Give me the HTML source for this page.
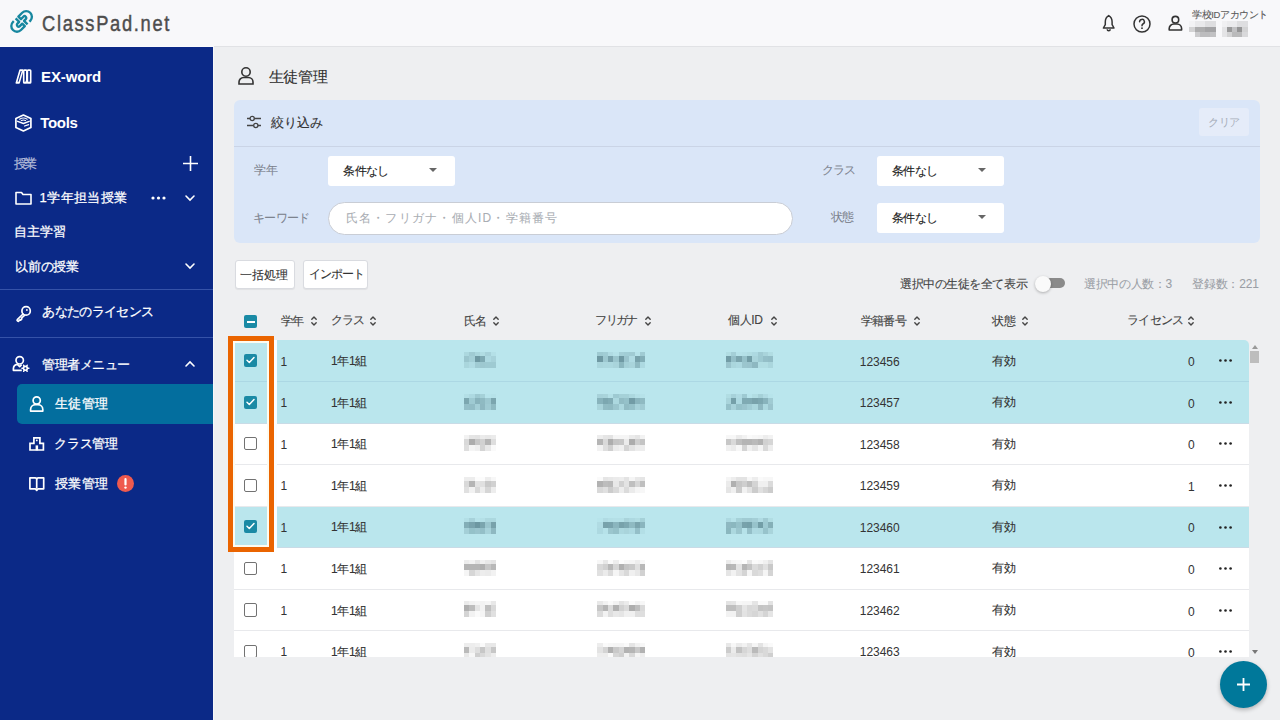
<!DOCTYPE html>
<html lang="ja">
<head>
<meta charset="utf-8">
<style>
*{box-sizing:border-box;margin:0;padding:0}
html,body{width:1280px;height:720px;overflow:hidden;background:#eeeff1;font-family:"Liberation Sans",sans-serif;color:#333}
.abs{position:absolute}
.t{position:absolute;white-space:nowrap;line-height:1;-webkit-text-stroke:0.12px currentColor}
.sb{-webkit-text-stroke:0.25px currentColor}
#jugyo{-webkit-text-stroke:0.18px currentColor}
#l_grade,#l_kw,#l_class,#l_state,#ph,#clear,#selcount,#total{-webkit-text-stroke:0.05px currentColor}
#exword,#tools{-webkit-text-stroke:0}
.dg{-webkit-text-stroke:0}
svg{position:absolute;overflow:visible}
.row{position:absolute;left:0;width:1015px}
.mz{position:absolute}
.mz i{position:absolute;display:block}
</style>
</head>
<body>
<div class="abs" style="left:0;top:0;width:1280px;height:47px;background:#f8f8fa;border-bottom:1px solid #e1e2e5"></div>
<svg style="left:0px;top:0px" width="44" height="44" viewBox="0 0 44 44">
<g transform="translate(21.6 21.4) rotate(-45) scale(0.86)" fill="none" stroke="#17879f" stroke-width="2.75" stroke-linejoin="round">
<path d="M6.2 6.6 H7.6 A6.6 6.6 0 0 0 7.6 -6.6 H1.3 V-2.4 H5.3 A2 2 0 0 1 5.3 1.6 H2.4 V7.4"/>
<path d="M-6.2 -6.6 H-7.6 A6.6 6.6 0 0 0 -7.6 6.6 H-1.3 V2.4 H-5.3 A2 2 0 0 1 -5.3 -1.6 H-2.4 V-7.4"/>
</g></svg>
<div class="t" id="logo" style="left:42.00px;top:13.20px;font-size:21.80px;color:#4d4d4d;letter-spacing:2.00px;transform:scaleX(0.84);transform-origin:0 0;-webkit-text-stroke:0.45px #4d4d4d;">ClassPad.net</div>
<svg style="left:0;top:0" width="1" height="1" viewBox="0 0 1 1" fill="none" stroke="#333" stroke-width="1.5" stroke-linejoin="round">
<path d="M1108.7 15.6 C1106.2 17 1105.3 19.3 1105.3 22 V24.6 L1103.4 28 H1114 L1112.1 24.6 V22 C1112.1 19.3 1111.2 17 1108.7 15.6 Z"/>
<path d="M1107.2 29.2 A1.5 1.5 0 0 0 1110.2 29.2"/></svg>
<svg style="left:1133px;top:14.5px" width="18" height="18" viewBox="0 0 18 18" fill="none" stroke="#333" stroke-width="1.5">
<circle cx="9" cy="9" r="8"/>
<path d="M6.6 6.8 A2.4 2.4 0 1 1 9.9 9 C9.2 9.4 9 9.9 9 10.8" stroke-linecap="round"/>
<circle cx="9" cy="13.2" r="0.9" fill="#333" stroke="none"/></svg>
<svg style="left:0;top:0" width="1" height="1" viewBox="0 0 1 1" fill="none" stroke="#333" stroke-width="1.6" stroke-linejoin="round">
<circle cx="1175.4" cy="19.7" r="3.3"/>
<path d="M1169.2 30 V28.6 A4.6 4.6 0 0 1 1173.8 24 H1177 A4.6 4.6 0 0 1 1181.6 28.6 V30 Z"/></svg>
<div class="t" id="acct" style="left:1192.00px;top:10.40px;font-size:9.50px;color:#5c5c5c;letter-spacing:-0.40px;">学校IDアカウント</div>
<i class="abs" style="left:1189px;top:21px;width:6px;height:6px;background:rgba(0,0,0,0.02)"></i><i class="abs" style="left:1195px;top:21px;width:5px;height:6px;background:rgba(0,0,0,0.06)"></i><i class="abs" style="left:1200px;top:21px;width:5px;height:6px;background:rgba(0,0,0,0.06)"></i><i class="abs" style="left:1205px;top:21px;width:5px;height:6px;background:rgba(0,0,0,0.1)"></i><i class="abs" style="left:1210px;top:21px;width:6px;height:6px;background:rgba(0,0,0,0.1)"></i><i class="abs" style="left:1189px;top:27px;width:6px;height:5px;background:rgba(0,0,0,0.15)"></i><i class="abs" style="left:1195px;top:27px;width:5px;height:5px;background:rgba(0,0,0,0.3)"></i><i class="abs" style="left:1200px;top:27px;width:5px;height:5px;background:rgba(0,0,0,0.3)"></i><i class="abs" style="left:1205px;top:27px;width:5px;height:5px;background:rgba(0,0,0,0.34)"></i><i class="abs" style="left:1210px;top:27px;width:6px;height:5px;background:rgba(0,0,0,0.34)"></i><i class="abs" style="left:1189px;top:32px;width:6px;height:5px;background:rgba(0,0,0,0.0)"></i><i class="abs" style="left:1195px;top:32px;width:5px;height:5px;background:rgba(0,0,0,0.18)"></i><i class="abs" style="left:1200px;top:32px;width:5px;height:5px;background:rgba(0,0,0,0.24)"></i><i class="abs" style="left:1205px;top:32px;width:5px;height:5px;background:rgba(0,0,0,0.24)"></i><i class="abs" style="left:1210px;top:32px;width:6px;height:5px;background:rgba(0,0,0,0.22)"></i><i class="abs" style="left:1222px;top:21px;width:5px;height:6px;background:rgba(0,0,0,0.03)"></i><i class="abs" style="left:1227px;top:21px;width:5px;height:6px;background:rgba(0,0,0,0.05)"></i><i class="abs" style="left:1232px;top:21px;width:5px;height:6px;background:rgba(0,0,0,0.05)"></i><i class="abs" style="left:1237px;top:21px;width:5px;height:6px;background:rgba(0,0,0,0.1)"></i><i class="abs" style="left:1242px;top:21px;width:6px;height:6px;background:rgba(0,0,0,0.1)"></i><i class="abs" style="left:1222px;top:27px;width:5px;height:5px;background:rgba(0,0,0,0.08)"></i><i class="abs" style="left:1227px;top:27px;width:5px;height:5px;background:rgba(0,0,0,0.38)"></i><i class="abs" style="left:1232px;top:27px;width:5px;height:5px;background:rgba(0,0,0,0.22)"></i><i class="abs" style="left:1237px;top:27px;width:5px;height:5px;background:rgba(0,0,0,0.4)"></i><i class="abs" style="left:1242px;top:27px;width:6px;height:5px;background:rgba(0,0,0,0.15)"></i><i class="abs" style="left:1222px;top:32px;width:5px;height:5px;background:rgba(0,0,0,0.08)"></i><i class="abs" style="left:1227px;top:32px;width:5px;height:5px;background:rgba(0,0,0,0.15)"></i><i class="abs" style="left:1232px;top:32px;width:5px;height:5px;background:rgba(0,0,0,0.25)"></i><i class="abs" style="left:1237px;top:32px;width:5px;height:5px;background:rgba(0,0,0,0.25)"></i><i class="abs" style="left:1242px;top:32px;width:6px;height:5px;background:rgba(0,0,0,0.12)"></i>
<div class="abs" style="left:0;top:46px;width:213.5px;height:1px;background:#fbfbfd"></div>
<div class="abs" style="left:0;top:47px;width:213px;height:673px;background:#0b2987"></div>
<div class="abs" style="left:213px;top:47px;width:1px;height:673px;background:#f6f7f9"></div>
<svg style="left:15px;top:69px" width="17" height="15" viewBox="0 0 17 15" fill="none" stroke="#fff" stroke-width="1.6" stroke-linejoin="round">
<path d="M5.1 1.1 H7.8 L4.1 13.9 H1.3 Z"/>
<rect x="8.7" y="1.1" width="3.1" height="12.8" rx="0.7"/>
<rect x="12.4" y="1.1" width="3.3" height="12.8" rx="0.7"/>
<circle cx="2.9" cy="12.3" r="0.55" fill="#fff" stroke="none"/><circle cx="10.25" cy="12.3" r="0.55" fill="#fff" stroke="none"/><circle cx="14.05" cy="12.3" r="0.55" fill="#fff" stroke="none"/>
</svg>
<div class="t" id="exword" style="left:41.00px;top:69.00px;font-size:15.00px;color:#fff;font-weight:700;letter-spacing:-0.10px;">EX-word</div>
<svg style="left:15px;top:114px" width="17" height="18" viewBox="0 0 17 18" fill="none" stroke="#fff" stroke-width="1.7" stroke-linejoin="round" stroke-linecap="round">
<path d="M8.4 1 L15.9 4.6 V13.5 L8.4 17 L0.9 13.5 V4.6 Z"/>
<path d="M2.6 7.3 L8.4 9.5 L14.2 7.3" stroke-width="1.4"/>
<path d="M4.6 5.2 Q8.4 2.9 12.2 5.2 M6.3 6.6 Q8.4 5.5 10.5 6.6" stroke-width="1.1"/>
<path d="M9.6 12 L13.6 10.6" stroke-width="1.3"/>
</svg>
<div class="t" id="tools" style="left:40.20px;top:115.40px;font-size:15.00px;color:#fff;font-weight:700;letter-spacing:-0.30px;">Tools</div>
<div class="t" id="jugyo" style="left:13.60px;top:157.00px;font-size:13.00px;color:#b4bcd9;letter-spacing:-2.60px;">授業</div>
<svg style="left:182.5px;top:155.5px" width="15" height="15" viewBox="0 0 15 15" stroke="#fff" stroke-width="1.6"><path d="M7.5 0V15M0 7.5H15"/></svg>
<svg style="left:15px;top:190.5px" width="17" height="14" viewBox="0 0 17 14" fill="none" stroke="#fff" stroke-width="1.6" stroke-linejoin="round">
<path d="M1 1.5 H6.5 L8 3.5 H16 V13 H1 Z"/></svg>
<div class="t sb" id="grade1" style="left:39.60px;top:191.40px;font-size:13.00px;color:#fff;letter-spacing:0.40px;">1学年担当授業</div>
<svg style="left:151px;top:195.5px" width="15" height="4" viewBox="0 0 15 4" fill="#fff"><circle cx="2" cy="2" r="1.6"/><circle cx="7.5" cy="2" r="1.6"/><circle cx="13" cy="2" r="1.6"/></svg>
<svg style="left:185px;top:194.5px" width="10" height="6" viewBox="0 0 10 6" fill="none" stroke="#fff" stroke-width="1.6" stroke-linecap="round"><path d="M1 1L5 5L9 1"/></svg>
<div class="t sb" id="jishu" style="left:13.80px;top:225.20px;font-size:13.00px;color:#fff;letter-spacing:0.07px;">自主学習</div>
<div class="t sb" id="izen" style="left:14.80px;top:259.60px;font-size:13.00px;color:#fff;letter-spacing:-0.10px;">以前の授業</div>
<svg style="left:185px;top:262.5px" width="10" height="6" viewBox="0 0 10 6" fill="none" stroke="#fff" stroke-width="1.6" stroke-linecap="round"><path d="M1 1L5 5L9 1"/></svg>
<div class="abs" style="left:0;top:289px;width:213px;height:1px;background:#3552a8"></div>
<svg style="left:0;top:0" width="1" height="1" viewBox="0 0 1 1" fill="none" stroke="#fff" stroke-width="1.7" stroke-linecap="round" stroke-linejoin="round">
<circle cx="26.1" cy="310.9" r="4.2"/><circle cx="26.9" cy="310" r="0.9" fill="#fff" stroke="none"/>
<path d="M23 314 L17.3 319.7 Q16.8 320.4 17.5 320.9 L18.3 321.3 L19.9 319.9 L20.6 320.2 L21.8 318.9 L21.6 318 L24.5 315.3"/>
</svg>
<div class="t sb" id="license" style="left:42.40px;top:305.20px;font-size:13.00px;color:#fff;letter-spacing:-0.65px;">あなたのライセンス</div>
<div class="abs" style="left:0;top:337px;width:213px;height:1px;background:#3552a8"></div>
<svg style="left:0;top:0" width="1" height="1" viewBox="0 0 1 1" fill="none" stroke="#fff" stroke-width="1.7" stroke-linejoin="round">
<circle cx="19.7" cy="360.3" r="3.7"/>
<path d="M21.8 370.3 H13.4 V368.6 A4.6 4.6 0 0 1 17.4 364.3 L19.7 366.6 L21.6 364.6"/>
<circle cx="25.4" cy="368.3" r="1.9" stroke-width="1.6"/>
<path d="M27.60 368.30 L28.90 368.30 M26.50 370.21 L27.15 371.33 M24.30 370.21 L23.65 371.33 M23.20 368.30 L21.90 368.30 M24.30 366.39 L23.65 365.27 M26.50 366.39 L27.15 365.27" stroke-width="1.5" stroke-linecap="round"/>
</svg>
<div class="t sb" id="admin" style="left:42.00px;top:358.40px;font-size:13.00px;color:#fff;letter-spacing:-0.43px;">管理者メニュー</div>
<svg style="left:185px;top:361px" width="10" height="6" viewBox="0 0 10 6" fill="none" stroke="#fff" stroke-width="1.6" stroke-linecap="round"><path d="M1 5L5 1L9 5"/></svg>
<div class="abs" style="left:16.5px;top:383.7px;width:196.5px;height:40px;background:#036e9e;border-radius:5px 0 0 5px"></div>
<svg style="left:0;top:0" width="1" height="1" viewBox="0 0 1 1" fill="none" stroke="#fff" stroke-width="1.7" stroke-linejoin="round">
<circle cx="36.7" cy="400.5" r="3.6"/>
<path d="M30.6 411.1 V409.6 A4.9 4.9 0 0 1 35.5 404.7 H37.9 A4.9 4.9 0 0 1 42.8 409.6 V411.1 Z"/>
</svg>
<div class="t sb" id="seito_s" style="left:55.00px;top:397.20px;font-size:13.00px;color:#fff;letter-spacing:0.33px;">生徒管理</div>
<svg style="left:0;top:0" width="1" height="1" viewBox="0 0 1 1" fill="none" stroke="#fff" stroke-width="1.7" stroke-linejoin="miter">
<path d="M30 450 V443.3 H33.9 V437.8 H39.9 V443.3 H43.4 V450 Z"/>
<circle cx="36.8" cy="440.4" r="0.9" fill="#fff" stroke="none"/>
<rect x="35.6" y="445.4" width="2.5" height="5" fill="#fff" stroke="none"/>
</svg>
<div class="t sb" id="class_s" style="left:54.00px;top:437.00px;font-size:13.00px;color:#fff;letter-spacing:-0.25px;">クラス管理</div>
<svg style="left:0;top:0" width="1" height="1" viewBox="0 0 1 1" fill="none" stroke="#fff" stroke-width="1.7" stroke-linejoin="round">
<path d="M29.9 477.9 H35.3 Q36.7 477.9 36.7 479.2 Q36.7 477.9 38.1 477.9 H43.7 V488.8 H38.1 L36.7 490.4 L35.3 488.8 H29.9 Z"/>
<path d="M36.7 479.2 V488.8"/>
</svg>
<div class="t sb" id="jugyo_s" style="left:55.00px;top:477.00px;font-size:13.00px;color:#fff;letter-spacing:0.33px;">授業管理</div>
<svg style="left:117px;top:475px" width="17" height="17" viewBox="0 0 17 17"><circle cx="8.5" cy="8.5" r="8.5" fill="#ef5a4e"/><path d="M8.5 4 V9.5" stroke="#fff" stroke-width="2.2" stroke-linecap="round"/><circle cx="8.5" cy="12.6" r="1.2" fill="#fff"/></svg>
<svg style="left:238px;top:67px" width="16" height="18" viewBox="0 0 16 18" fill="none" stroke="#333" stroke-width="1.6">
<circle cx="8" cy="5" r="4.2"/>
<path d="M1 17 V15 A4.5 4.5 0 0 1 5.5 10.5 H10.5 A4.5 4.5 0 0 1 15 15 V17 Z"/></svg>
<div class="t" id="title" style="left:268.60px;top:69.30px;font-size:15.00px;color:#333;letter-spacing:-0.33px;">生徒管理</div>
<div class="abs" style="left:234px;top:100px;width:1026px;height:143px;background:#dae6f8;border-radius:6px"></div>
<div class="abs" style="left:234px;top:146px;width:1026px;height:1px;background:#cad4e6"></div>
<svg style="left:246px;top:115px" width="16" height="14" viewBox="0 0 16 14" fill="none" stroke="#444" stroke-width="1.3">
<path d="M1 3.5H4M8.5 3.5H15M1 10.5H7.5M12 10.5H15"/>
<circle cx="6.2" cy="3.5" r="2.1"/><circle cx="9.8" cy="10.5" r="2.1"/></svg>
<div class="t" id="shibori" style="left:271.00px;top:115.80px;font-size:13.00px;color:#333;letter-spacing:0.07px;">絞り込み</div>
<div class="abs" style="left:1199px;top:108px;width:50px;height:28px;background:#e5ecf9;border-radius:3px"></div>
<div class="t" id="clear" style="left:1208.00px;top:116.80px;font-size:11.00px;color:#a9b0bc;letter-spacing:-0.50px;">クリア</div>
<div class="t" id="l_grade" style="left:254.20px;top:164.40px;font-size:12.00px;color:#7d838e;">学年</div>
<div class="abs" style="left:328px;top:156px;width:127px;height:30px;background:#fff;border-radius:3px"></div>
<div class="t" id="sel1" style="left:343.20px;top:165.10px;font-size:12.00px;color:#222;letter-spacing:-0.60px;">条件なし</div>
<svg style="left:429px;top:168px" width="8" height="4" viewBox="0 0 8 4"><path d="M0 0H8L4 4Z" fill="#666"/></svg>
<div class="t" id="l_kw" style="left:253.20px;top:211.80px;font-size:12.00px;color:#7d838e;letter-spacing:-0.80px;">キーワード</div>
<div class="abs" style="left:327.5px;top:201.5px;width:465px;height:33.5px;background:#fff;border:1px solid #c9cdd5;border-radius:17px"></div>
<div class="t" id="ph" style="left:345.60px;top:212.00px;font-size:12.00px;color:#a9adb3;letter-spacing:1.24px;">氏名・フリガナ・個人ID・学籍番号</div>
<div class="t" id="l_class" style="left:821.60px;top:164.00px;font-size:12.00px;color:#7d838e;letter-spacing:-0.80px;">クラス</div>
<div class="abs" style="left:877px;top:156px;width:127px;height:30px;background:#fff;border-radius:3px"></div>
<div class="t" id="sel2" style="left:892.20px;top:165.30px;font-size:12.00px;color:#222;letter-spacing:-0.73px;">条件なし</div>
<svg style="left:978px;top:168px" width="8" height="4" viewBox="0 0 8 4"><path d="M0 0H8L4 4Z" fill="#666"/></svg>
<div class="t" id="l_state" style="left:831.00px;top:210.80px;font-size:12.00px;color:#7d838e;letter-spacing:-0.80px;">状態</div>
<div class="abs" style="left:877px;top:202.7px;width:127px;height:30px;background:#fff;border-radius:3px"></div>
<div class="t" id="sel3" style="left:892.20px;top:211.90px;font-size:12.00px;color:#222;letter-spacing:-0.73px;">条件なし</div>
<svg style="left:978px;top:214.7px" width="8" height="4" viewBox="0 0 8 4"><path d="M0 0H8L4 4Z" fill="#666"/></svg>
<div class="abs" style="left:234.5px;top:260.3px;width:60.5px;height:29px;background:#fff;border:1px solid #d9dbe0;border-radius:3px;box-shadow:0 1px 1px rgba(0,0,0,.06)"></div>
<div class="t" id="btn1" style="left:240.40px;top:269.20px;font-size:12.00px;color:#333;letter-spacing:-0.07px;">一括処理</div>
<div class="abs" style="left:302.6px;top:260.3px;width:65.8px;height:29px;background:#fff;border:1px solid #d9dbe0;border-radius:3px;box-shadow:0 1px 1px rgba(0,0,0,.06)"></div>
<div class="t" id="btn2" style="left:308.60px;top:268.40px;font-size:12.00px;color:#333;letter-spacing:-0.95px;">インポート</div>
<div class="t" id="showall" style="left:900.00px;top:277.60px;font-size:12.00px;color:#444;letter-spacing:-0.44px;">選択中の生徒を全て表示</div>
<div class="abs" style="left:1038.4px;top:277.6px;width:26.5px;height:10.5px;background:#8a8a8a;border-radius:6px"></div>
<div class="abs" style="left:1035px;top:276.2px;width:16px;height:16px;background:#fafafa;border-radius:50%;box-shadow:0 1px 3px rgba(0,0,0,.28)"></div>
<div class="t" id="selcount" style="left:1084.00px;top:278.40px;font-size:12.00px;color:#9a9ea5;letter-spacing:-0.34px;">選択中の人数：3</div>
<div class="t" id="total" style="left:1192.00px;top:277.80px;font-size:12.00px;color:#9a9ea5;letter-spacing:-0.17px;">登録数：221</div>
<div class="abs" style="left:244px;top:315.3px;width:13.2px;height:13.2px;background:#1a8aa5;border-radius:2px"></div>
<div class="abs" style="left:246.6px;top:320.9px;width:8px;height:2px;background:#fff"></div>
<div class="t" id="h_grade" style="left:281.00px;top:314.80px;font-size:12.00px;color:#444;letter-spacing:-1.00px;">学年</div>
<svg style="left:311px;top:316.3px" width="6" height="10" viewBox="0 0 6 10" fill="none" stroke="#444" stroke-width="1.4" stroke-linecap="round" stroke-linejoin="round"><path d="M0.8 3.2L3 1L5.2 3.2M0.8 6.8L3 9L5.2 6.8"/></svg>
<div class="t" id="h_class" style="left:330.80px;top:313.90px;font-size:12.00px;color:#444;letter-spacing:-1.10px;">クラス</div>
<svg style="left:370px;top:316.3px" width="6" height="10" viewBox="0 0 6 10" fill="none" stroke="#444" stroke-width="1.4" stroke-linecap="round" stroke-linejoin="round"><path d="M0.8 3.2L3 1L5.2 3.2M0.8 6.8L3 9L5.2 6.8"/></svg>
<div class="t" id="h_name" style="left:463.80px;top:314.80px;font-size:12.00px;color:#444;letter-spacing:-0.80px;">氏名</div>
<svg style="left:493.3px;top:316.3px" width="6" height="10" viewBox="0 0 6 10" fill="none" stroke="#444" stroke-width="1.4" stroke-linecap="round" stroke-linejoin="round"><path d="M0.8 3.2L3 1L5.2 3.2M0.8 6.8L3 9L5.2 6.8"/></svg>
<div class="t" id="h_kana" style="left:595.20px;top:314.00px;font-size:12.00px;color:#444;letter-spacing:-1.60px;">フリガナ</div>
<svg style="left:644.8px;top:316.3px" width="6" height="10" viewBox="0 0 6 10" fill="none" stroke="#444" stroke-width="1.4" stroke-linecap="round" stroke-linejoin="round"><path d="M0.8 3.2L3 1L5.2 3.2M0.8 6.8L3 9L5.2 6.8"/></svg>
<div class="t" id="h_id" style="left:727.80px;top:314.20px;font-size:12.00px;color:#444;letter-spacing:-0.27px;">個人ID</div>
<svg style="left:770.8px;top:316.3px" width="6" height="10" viewBox="0 0 6 10" fill="none" stroke="#444" stroke-width="1.4" stroke-linecap="round" stroke-linejoin="round"><path d="M0.8 3.2L3 1L5.2 3.2M0.8 6.8L3 9L5.2 6.8"/></svg>
<div class="t" id="h_num" style="left:860.80px;top:314.60px;font-size:12.00px;color:#444;letter-spacing:-0.73px;">学籍番号</div>
<svg style="left:913.75px;top:316.3px" width="6" height="10" viewBox="0 0 6 10" fill="none" stroke="#444" stroke-width="1.4" stroke-linecap="round" stroke-linejoin="round"><path d="M0.8 3.2L3 1L5.2 3.2M0.8 6.8L3 9L5.2 6.8"/></svg>
<div class="t" id="h_state" style="left:992.20px;top:315.00px;font-size:12.00px;color:#444;letter-spacing:-0.20px;">状態</div>
<svg style="left:1021.5px;top:316.3px" width="6" height="10" viewBox="0 0 6 10" fill="none" stroke="#444" stroke-width="1.4" stroke-linecap="round" stroke-linejoin="round"><path d="M0.8 3.2L3 1L5.2 3.2M0.8 6.8L3 9L5.2 6.8"/></svg>
<div class="t" id="h_lic" style="left:1127.00px;top:314.00px;font-size:12.00px;color:#444;letter-spacing:-0.70px;">ライセンス</div>
<svg style="left:1188.4px;top:316.3px" width="6" height="10" viewBox="0 0 6 10" fill="none" stroke="#444" stroke-width="1.4" stroke-linecap="round" stroke-linejoin="round"><path d="M0.8 3.2L3 1L5.2 3.2M0.8 6.8L3 9L5.2 6.8"/></svg>
<div id="tb" class="abs" style="left:234px;top:340px;width:1014.5px;height:317px;overflow:hidden;border-radius:5px 5px 0 0"><div class="row" style="top:0.00px;height:42.07px;background:#bae6ed"></div>
<div class="abs" style="left:10px;top:13.98px;width:13.2px;height:13.2px;background:#1a8aa5;border-radius:2px"></div>
<svg style="left:12.2px;top:16.19px" width="9" height="8" viewBox="0 0 9 8" fill="none" stroke="#fff" stroke-width="1.5" stroke-linecap="round" stroke-linejoin="round"><path d="M1 4.3L3.3 6.5L8 1.5"/></svg>
<div class="t dg" id="r0_grade" style="left:46.50px;top:15.50px;font-size:12.00px;color:#333;">1</div>
<div class="t" id="r0_class" style="left:97.10px;top:15.20px;font-size:12.00px;color:#333;letter-spacing:-0.33px;">1年1組</div>
<div class="mz" style="left:230px;top:12px;width:32px;height:16px"><i style="left:0.00px;top:0.0px;width:5.00px;height:4.0px;background:rgba(15,55,68,0.08)"></i><i style="left:5.00px;top:0.0px;width:6.00px;height:4.0px;background:rgba(15,55,68,0.15)"></i><i style="left:11.00px;top:0.0px;width:5.00px;height:4.0px;background:rgba(15,55,68,0.09)"></i><i style="left:16.00px;top:0.0px;width:5.00px;height:4.0px;background:rgba(15,55,68,0.05)"></i><i style="left:21.00px;top:0.0px;width:6.00px;height:4.0px;background:rgba(15,55,68,0.11)"></i><i style="left:27.00px;top:0.0px;width:5.00px;height:4.0px;background:rgba(15,55,68,0.03)"></i><i style="left:0.00px;top:4.0px;width:5.00px;height:6.0px;background:rgba(15,55,68,0.18)"></i><i style="left:5.00px;top:4.0px;width:6.00px;height:6.0px;background:rgba(15,55,68,0.13)"></i><i style="left:11.00px;top:4.0px;width:5.00px;height:6.0px;background:rgba(15,55,68,0.44)"></i><i style="left:16.00px;top:4.0px;width:5.00px;height:6.0px;background:rgba(15,55,68,0.35)"></i><i style="left:21.00px;top:4.0px;width:6.00px;height:6.0px;background:rgba(15,55,68,0.07)"></i><i style="left:27.00px;top:4.0px;width:5.00px;height:6.0px;background:rgba(15,55,68,0.11)"></i><i style="left:0.00px;top:10.0px;width:5.00px;height:6.0px;background:rgba(15,55,68,0.09)"></i><i style="left:5.00px;top:10.0px;width:6.00px;height:6.0px;background:rgba(15,55,68,0.06)"></i><i style="left:11.00px;top:10.0px;width:5.00px;height:6.0px;background:rgba(15,55,68,0.15)"></i><i style="left:16.00px;top:10.0px;width:5.00px;height:6.0px;background:rgba(15,55,68,0.17)"></i><i style="left:21.00px;top:10.0px;width:6.00px;height:6.0px;background:rgba(15,55,68,0.16)"></i><i style="left:27.00px;top:10.0px;width:5.00px;height:6.0px;background:rgba(15,55,68,0.16)"></i></div>
<div class="mz" style="left:363.2px;top:12px;width:48px;height:16px"><i style="left:-0.20px;top:0.0px;width:6.00px;height:4.0px;background:rgba(15,55,68,0.16)"></i><i style="left:5.80px;top:0.0px;width:5.00px;height:4.0px;background:rgba(15,55,68,0.14)"></i><i style="left:10.80px;top:0.0px;width:5.00px;height:4.0px;background:rgba(15,55,68,0.06)"></i><i style="left:15.80px;top:0.0px;width:6.00px;height:4.0px;background:rgba(15,55,68,0.02)"></i><i style="left:21.80px;top:0.0px;width:5.00px;height:4.0px;background:rgba(15,55,68,0.13)"></i><i style="left:26.80px;top:0.0px;width:5.00px;height:4.0px;background:rgba(15,55,68,0.14)"></i><i style="left:31.80px;top:0.0px;width:6.00px;height:4.0px;background:rgba(15,55,68,0.15)"></i><i style="left:37.80px;top:0.0px;width:5.00px;height:4.0px;background:rgba(15,55,68,0.02)"></i><i style="left:42.80px;top:0.0px;width:5.00px;height:4.0px;background:rgba(15,55,68,0.15)"></i><i style="left:-0.20px;top:4.0px;width:6.00px;height:6.0px;background:rgba(15,55,68,0.44)"></i><i style="left:5.80px;top:4.0px;width:5.00px;height:6.0px;background:rgba(15,55,68,0.17)"></i><i style="left:10.80px;top:4.0px;width:5.00px;height:6.0px;background:rgba(15,55,68,0.38)"></i><i style="left:15.80px;top:4.0px;width:6.00px;height:6.0px;background:rgba(15,55,68,0.18)"></i><i style="left:21.80px;top:4.0px;width:5.00px;height:6.0px;background:rgba(15,55,68,0.44)"></i><i style="left:26.80px;top:4.0px;width:5.00px;height:6.0px;background:rgba(15,55,68,0.19)"></i><i style="left:31.80px;top:4.0px;width:6.00px;height:6.0px;background:rgba(15,55,68,0.06)"></i><i style="left:37.80px;top:4.0px;width:5.00px;height:6.0px;background:rgba(15,55,68,0.39)"></i><i style="left:42.80px;top:4.0px;width:5.00px;height:6.0px;background:rgba(15,55,68,0.32)"></i><i style="left:-0.20px;top:10.0px;width:6.00px;height:6.0px;background:rgba(15,55,68,0.09)"></i><i style="left:5.80px;top:10.0px;width:5.00px;height:6.0px;background:rgba(15,55,68,0.08)"></i><i style="left:10.80px;top:10.0px;width:5.00px;height:6.0px;background:rgba(15,55,68,0.08)"></i><i style="left:15.80px;top:10.0px;width:6.00px;height:6.0px;background:rgba(15,55,68,0.10)"></i><i style="left:21.80px;top:10.0px;width:5.00px;height:6.0px;background:rgba(15,55,68,0.27)"></i><i style="left:26.80px;top:10.0px;width:5.00px;height:6.0px;background:rgba(15,55,68,0.12)"></i><i style="left:31.80px;top:10.0px;width:6.00px;height:6.0px;background:rgba(15,55,68,0.10)"></i><i style="left:37.80px;top:10.0px;width:5.00px;height:6.0px;background:rgba(15,55,68,0.25)"></i><i style="left:42.80px;top:10.0px;width:5.00px;height:6.0px;background:rgba(15,55,68,0.07)"></i></div>
<div class="mz" style="left:491.7px;top:12px;width:47.7px;height:16px"><i style="left:0.30px;top:0.0px;width:5.00px;height:4.0px;background:rgba(15,55,68,0.05)"></i><i style="left:5.30px;top:0.0px;width:5.00px;height:4.0px;background:rgba(15,55,68,0.13)"></i><i style="left:10.30px;top:0.0px;width:6.00px;height:4.0px;background:rgba(15,55,68,0.02)"></i><i style="left:16.30px;top:0.0px;width:5.00px;height:4.0px;background:rgba(15,55,68,0.03)"></i><i style="left:21.30px;top:0.0px;width:5.00px;height:4.0px;background:rgba(15,55,68,0.05)"></i><i style="left:26.30px;top:0.0px;width:6.00px;height:4.0px;background:rgba(15,55,68,0.07)"></i><i style="left:32.30px;top:0.0px;width:5.00px;height:4.0px;background:rgba(15,55,68,0.15)"></i><i style="left:37.30px;top:0.0px;width:5.00px;height:4.0px;background:rgba(15,55,68,0.10)"></i><i style="left:42.30px;top:0.0px;width:5.00px;height:4.0px;background:rgba(15,55,68,0.05)"></i><i style="left:0.30px;top:4.0px;width:5.00px;height:6.0px;background:rgba(15,55,68,0.42)"></i><i style="left:5.30px;top:4.0px;width:5.00px;height:6.0px;background:rgba(15,55,68,0.22)"></i><i style="left:10.30px;top:4.0px;width:6.00px;height:6.0px;background:rgba(15,55,68,0.37)"></i><i style="left:16.30px;top:4.0px;width:5.00px;height:6.0px;background:rgba(15,55,68,0.21)"></i><i style="left:21.30px;top:4.0px;width:5.00px;height:6.0px;background:rgba(15,55,68,0.41)"></i><i style="left:26.30px;top:4.0px;width:6.00px;height:6.0px;background:rgba(15,55,68,0.10)"></i><i style="left:32.30px;top:4.0px;width:5.00px;height:6.0px;background:rgba(15,55,68,0.16)"></i><i style="left:37.30px;top:4.0px;width:5.00px;height:6.0px;background:rgba(15,55,68,0.22)"></i><i style="left:42.30px;top:4.0px;width:5.00px;height:6.0px;background:rgba(15,55,68,0.23)"></i><i style="left:0.30px;top:10.0px;width:5.00px;height:6.0px;background:rgba(15,55,68,0.19)"></i><i style="left:5.30px;top:10.0px;width:5.00px;height:6.0px;background:rgba(15,55,68,0.09)"></i><i style="left:10.30px;top:10.0px;width:6.00px;height:6.0px;background:rgba(15,55,68,0.07)"></i><i style="left:16.30px;top:10.0px;width:5.00px;height:6.0px;background:rgba(15,55,68,0.18)"></i><i style="left:21.30px;top:10.0px;width:5.00px;height:6.0px;background:rgba(15,55,68,0.19)"></i><i style="left:26.30px;top:10.0px;width:6.00px;height:6.0px;background:rgba(15,55,68,0.26)"></i><i style="left:32.30px;top:10.0px;width:5.00px;height:6.0px;background:rgba(15,55,68,0.05)"></i><i style="left:37.30px;top:10.0px;width:5.00px;height:6.0px;background:rgba(15,55,68,0.05)"></i><i style="left:42.30px;top:10.0px;width:5.00px;height:6.0px;background:rgba(15,55,68,0.09)"></i></div>
<div class="t dg" id="r0_num" style="left:625.80px;top:15.50px;font-size:12.00px;color:#333;letter-spacing:-0.04px;">123456</div>
<div class="t" id="r0_state" style="left:758.40px;top:14.60px;font-size:12.00px;color:#333;letter-spacing:-0.60px;">有効</div>
<div class="t dg" id="r0_lic" style="left:954.00px;top:16.20px;font-size:12.00px;color:#333;">0</div>
<svg style="left:984.5px;top:19.29px" width="13" height="3" viewBox="0 0 13 3" fill="#222"><circle cx="1.4" cy="1.5" r="1.3"/><circle cx="6.5" cy="1.5" r="1.3"/><circle cx="11.6" cy="1.5" r="1.3"/></svg>
<div class="row" style="top:41.57px;height:42.07px;background:#bae6ed"></div>
<div class="abs" style="left:0;top:41.07px;width:1015px;height:1px;background:#acd8e4"></div>
<div class="abs" style="left:10px;top:55.56px;width:13.2px;height:13.2px;background:#1a8aa5;border-radius:2px"></div>
<svg style="left:12.2px;top:57.76px" width="9" height="8" viewBox="0 0 9 8" fill="none" stroke="#fff" stroke-width="1.5" stroke-linecap="round" stroke-linejoin="round"><path d="M1 4.3L3.3 6.5L8 1.5"/></svg>
<div class="t dg" id="r1_grade" style="left:46.50px;top:57.07px;font-size:12.00px;color:#333;">1</div>
<div class="t" id="r1_class" style="left:97.10px;top:56.77px;font-size:12.00px;color:#333;letter-spacing:-0.33px;">1年1組</div>
<div class="mz" style="left:230px;top:54px;width:32px;height:16px"><i style="left:0.00px;top:0.0px;width:5.00px;height:4.0px;background:rgba(15,55,68,0.04)"></i><i style="left:5.00px;top:0.0px;width:6.00px;height:4.0px;background:rgba(15,55,68,0.07)"></i><i style="left:11.00px;top:0.0px;width:5.00px;height:4.0px;background:rgba(15,55,68,0.16)"></i><i style="left:16.00px;top:0.0px;width:5.00px;height:4.0px;background:rgba(15,55,68,0.12)"></i><i style="left:21.00px;top:0.0px;width:6.00px;height:4.0px;background:rgba(15,55,68,0.01)"></i><i style="left:27.00px;top:0.0px;width:5.00px;height:4.0px;background:rgba(15,55,68,0.02)"></i><i style="left:0.00px;top:4.0px;width:5.00px;height:6.0px;background:rgba(15,55,68,0.36)"></i><i style="left:5.00px;top:4.0px;width:6.00px;height:6.0px;background:rgba(15,55,68,0.16)"></i><i style="left:11.00px;top:4.0px;width:5.00px;height:6.0px;background:rgba(15,55,68,0.29)"></i><i style="left:16.00px;top:4.0px;width:5.00px;height:6.0px;background:rgba(15,55,68,0.25)"></i><i style="left:21.00px;top:4.0px;width:6.00px;height:6.0px;background:rgba(15,55,68,0.17)"></i><i style="left:27.00px;top:4.0px;width:5.00px;height:6.0px;background:rgba(15,55,68,0.37)"></i><i style="left:0.00px;top:10.0px;width:5.00px;height:6.0px;background:rgba(15,55,68,0.22)"></i><i style="left:5.00px;top:10.0px;width:6.00px;height:6.0px;background:rgba(15,55,68,0.23)"></i><i style="left:11.00px;top:10.0px;width:5.00px;height:6.0px;background:rgba(15,55,68,0.13)"></i><i style="left:16.00px;top:10.0px;width:5.00px;height:6.0px;background:rgba(15,55,68,0.26)"></i><i style="left:21.00px;top:10.0px;width:6.00px;height:6.0px;background:rgba(15,55,68,0.15)"></i><i style="left:27.00px;top:10.0px;width:5.00px;height:6.0px;background:rgba(15,55,68,0.25)"></i></div>
<div class="mz" style="left:363.2px;top:54px;width:48px;height:16px"><i style="left:-0.20px;top:0.0px;width:6.00px;height:4.0px;background:rgba(15,55,68,0.11)"></i><i style="left:5.80px;top:0.0px;width:5.00px;height:4.0px;background:rgba(15,55,68,0.10)"></i><i style="left:10.80px;top:0.0px;width:5.00px;height:4.0px;background:rgba(15,55,68,0.03)"></i><i style="left:15.80px;top:0.0px;width:6.00px;height:4.0px;background:rgba(15,55,68,0.16)"></i><i style="left:21.80px;top:0.0px;width:5.00px;height:4.0px;background:rgba(15,55,68,0.12)"></i><i style="left:26.80px;top:0.0px;width:5.00px;height:4.0px;background:rgba(15,55,68,0.12)"></i><i style="left:31.80px;top:0.0px;width:6.00px;height:4.0px;background:rgba(15,55,68,0.08)"></i><i style="left:37.80px;top:0.0px;width:5.00px;height:4.0px;background:rgba(15,55,68,0.03)"></i><i style="left:42.80px;top:0.0px;width:5.00px;height:4.0px;background:rgba(15,55,68,0.02)"></i><i style="left:-0.20px;top:4.0px;width:6.00px;height:6.0px;background:rgba(15,55,68,0.29)"></i><i style="left:5.80px;top:4.0px;width:5.00px;height:6.0px;background:rgba(15,55,68,0.36)"></i><i style="left:10.80px;top:4.0px;width:5.00px;height:6.0px;background:rgba(15,55,68,0.33)"></i><i style="left:15.80px;top:4.0px;width:6.00px;height:6.0px;background:rgba(15,55,68,0.08)"></i><i style="left:21.80px;top:4.0px;width:5.00px;height:6.0px;background:rgba(15,55,68,0.24)"></i><i style="left:26.80px;top:4.0px;width:5.00px;height:6.0px;background:rgba(15,55,68,0.21)"></i><i style="left:31.80px;top:4.0px;width:6.00px;height:6.0px;background:rgba(15,55,68,0.42)"></i><i style="left:37.80px;top:4.0px;width:5.00px;height:6.0px;background:rgba(15,55,68,0.28)"></i><i style="left:42.80px;top:4.0px;width:5.00px;height:6.0px;background:rgba(15,55,68,0.25)"></i><i style="left:-0.20px;top:10.0px;width:6.00px;height:6.0px;background:rgba(15,55,68,0.10)"></i><i style="left:5.80px;top:10.0px;width:5.00px;height:6.0px;background:rgba(15,55,68,0.24)"></i><i style="left:10.80px;top:10.0px;width:5.00px;height:6.0px;background:rgba(15,55,68,0.25)"></i><i style="left:15.80px;top:10.0px;width:6.00px;height:6.0px;background:rgba(15,55,68,0.18)"></i><i style="left:21.80px;top:10.0px;width:5.00px;height:6.0px;background:rgba(15,55,68,0.08)"></i><i style="left:26.80px;top:10.0px;width:5.00px;height:6.0px;background:rgba(15,55,68,0.24)"></i><i style="left:31.80px;top:10.0px;width:6.00px;height:6.0px;background:rgba(15,55,68,0.21)"></i><i style="left:37.80px;top:10.0px;width:5.00px;height:6.0px;background:rgba(15,55,68,0.11)"></i><i style="left:42.80px;top:10.0px;width:5.00px;height:6.0px;background:rgba(15,55,68,0.15)"></i></div>
<div class="mz" style="left:491.7px;top:54px;width:47.7px;height:16px"><i style="left:0.30px;top:0.0px;width:5.00px;height:4.0px;background:rgba(15,55,68,0.05)"></i><i style="left:5.30px;top:0.0px;width:5.00px;height:4.0px;background:rgba(15,55,68,0.11)"></i><i style="left:10.30px;top:0.0px;width:6.00px;height:4.0px;background:rgba(15,55,68,0.06)"></i><i style="left:16.30px;top:0.0px;width:5.00px;height:4.0px;background:rgba(15,55,68,0.16)"></i><i style="left:21.30px;top:0.0px;width:5.00px;height:4.0px;background:rgba(15,55,68,0.01)"></i><i style="left:26.30px;top:0.0px;width:6.00px;height:4.0px;background:rgba(15,55,68,0.05)"></i><i style="left:32.30px;top:0.0px;width:5.00px;height:4.0px;background:rgba(15,55,68,0.12)"></i><i style="left:37.30px;top:0.0px;width:5.00px;height:4.0px;background:rgba(15,55,68,0.06)"></i><i style="left:42.30px;top:0.0px;width:5.00px;height:4.0px;background:rgba(15,55,68,0.01)"></i><i style="left:0.30px;top:4.0px;width:5.00px;height:6.0px;background:rgba(15,55,68,0.10)"></i><i style="left:5.30px;top:4.0px;width:5.00px;height:6.0px;background:rgba(15,55,68,0.40)"></i><i style="left:10.30px;top:4.0px;width:6.00px;height:6.0px;background:rgba(15,55,68,0.07)"></i><i style="left:16.30px;top:4.0px;width:5.00px;height:6.0px;background:rgba(15,55,68,0.34)"></i><i style="left:21.30px;top:4.0px;width:5.00px;height:6.0px;background:rgba(15,55,68,0.34)"></i><i style="left:26.30px;top:4.0px;width:6.00px;height:6.0px;background:rgba(15,55,68,0.39)"></i><i style="left:32.30px;top:4.0px;width:5.00px;height:6.0px;background:rgba(15,55,68,0.36)"></i><i style="left:37.30px;top:4.0px;width:5.00px;height:6.0px;background:rgba(15,55,68,0.29)"></i><i style="left:42.30px;top:4.0px;width:5.00px;height:6.0px;background:rgba(15,55,68,0.15)"></i><i style="left:0.30px;top:10.0px;width:5.00px;height:6.0px;background:rgba(15,55,68,0.21)"></i><i style="left:5.30px;top:10.0px;width:5.00px;height:6.0px;background:rgba(15,55,68,0.11)"></i><i style="left:10.30px;top:10.0px;width:6.00px;height:6.0px;background:rgba(15,55,68,0.21)"></i><i style="left:16.30px;top:10.0px;width:5.00px;height:6.0px;background:rgba(15,55,68,0.19)"></i><i style="left:21.30px;top:10.0px;width:5.00px;height:6.0px;background:rgba(15,55,68,0.14)"></i><i style="left:26.30px;top:10.0px;width:6.00px;height:6.0px;background:rgba(15,55,68,0.09)"></i><i style="left:32.30px;top:10.0px;width:5.00px;height:6.0px;background:rgba(15,55,68,0.26)"></i><i style="left:37.30px;top:10.0px;width:5.00px;height:6.0px;background:rgba(15,55,68,0.08)"></i><i style="left:42.30px;top:10.0px;width:5.00px;height:6.0px;background:rgba(15,55,68,0.19)"></i></div>
<div class="t dg" id="r1_num" style="left:625.80px;top:57.07px;font-size:12.00px;color:#333;letter-spacing:-0.04px;">123457</div>
<div class="t" id="r1_state" style="left:758.40px;top:56.17px;font-size:12.00px;color:#333;letter-spacing:-0.60px;">有効</div>
<div class="t dg" id="r1_lic" style="left:954.00px;top:57.77px;font-size:12.00px;color:#333;">0</div>
<svg style="left:984.5px;top:60.86px" width="13" height="3" viewBox="0 0 13 3" fill="#222"><circle cx="1.4" cy="1.5" r="1.3"/><circle cx="6.5" cy="1.5" r="1.3"/><circle cx="11.6" cy="1.5" r="1.3"/></svg>
<div class="row" style="top:83.14px;height:42.07px;background:#fff"></div>
<div class="abs" style="left:0;top:82.64px;width:1015px;height:1px;background:#c9dbe6"></div>
<div class="abs" style="left:10px;top:97.12px;width:13.2px;height:13.2px;border:1.5px solid #727272;border-radius:2px"></div>
<div class="t dg" id="r2_grade" style="left:46.50px;top:98.64px;font-size:12.00px;color:#333;">1</div>
<div class="t" id="r2_class" style="left:97.10px;top:98.34px;font-size:12.00px;color:#333;letter-spacing:-0.33px;">1年1組</div>
<div class="mz" style="left:230px;top:95px;width:32px;height:16px"><i style="left:0.00px;top:0.0px;width:5.00px;height:4.0px;background:rgba(0,0,0,0.05)"></i><i style="left:5.00px;top:0.0px;width:6.00px;height:4.0px;background:rgba(0,0,0,0.10)"></i><i style="left:11.00px;top:0.0px;width:5.00px;height:4.0px;background:rgba(0,0,0,0.11)"></i><i style="left:16.00px;top:0.0px;width:5.00px;height:4.0px;background:rgba(0,0,0,0.08)"></i><i style="left:21.00px;top:0.0px;width:6.00px;height:4.0px;background:rgba(0,0,0,0.09)"></i><i style="left:27.00px;top:0.0px;width:5.00px;height:4.0px;background:rgba(0,0,0,0.08)"></i><i style="left:0.00px;top:4.0px;width:5.00px;height:6.0px;background:rgba(0,0,0,0.15)"></i><i style="left:5.00px;top:4.0px;width:6.00px;height:6.0px;background:rgba(0,0,0,0.32)"></i><i style="left:11.00px;top:4.0px;width:5.00px;height:6.0px;background:rgba(0,0,0,0.22)"></i><i style="left:16.00px;top:4.0px;width:5.00px;height:6.0px;background:rgba(0,0,0,0.18)"></i><i style="left:21.00px;top:4.0px;width:6.00px;height:6.0px;background:rgba(0,0,0,0.29)"></i><i style="left:27.00px;top:4.0px;width:5.00px;height:6.0px;background:rgba(0,0,0,0.13)"></i><i style="left:0.00px;top:10.0px;width:5.00px;height:6.0px;background:rgba(0,0,0,0.13)"></i><i style="left:5.00px;top:10.0px;width:6.00px;height:6.0px;background:rgba(0,0,0,0.04)"></i><i style="left:11.00px;top:10.0px;width:5.00px;height:6.0px;background:rgba(0,0,0,0.06)"></i><i style="left:16.00px;top:10.0px;width:5.00px;height:6.0px;background:rgba(0,0,0,0.17)"></i><i style="left:21.00px;top:10.0px;width:6.00px;height:6.0px;background:rgba(0,0,0,0.09)"></i><i style="left:27.00px;top:10.0px;width:5.00px;height:6.0px;background:rgba(0,0,0,0.02)"></i></div>
<div class="mz" style="left:363.2px;top:95px;width:48px;height:16px"><i style="left:-0.20px;top:0.0px;width:6.00px;height:4.0px;background:rgba(0,0,0,0.07)"></i><i style="left:5.80px;top:0.0px;width:5.00px;height:4.0px;background:rgba(0,0,0,0.10)"></i><i style="left:10.80px;top:0.0px;width:5.00px;height:4.0px;background:rgba(0,0,0,0.11)"></i><i style="left:15.80px;top:0.0px;width:6.00px;height:4.0px;background:rgba(0,0,0,0.04)"></i><i style="left:21.80px;top:0.0px;width:5.00px;height:4.0px;background:rgba(0,0,0,0.04)"></i><i style="left:26.80px;top:0.0px;width:5.00px;height:4.0px;background:rgba(0,0,0,0.04)"></i><i style="left:31.80px;top:0.0px;width:6.00px;height:4.0px;background:rgba(0,0,0,0.08)"></i><i style="left:37.80px;top:0.0px;width:5.00px;height:4.0px;background:rgba(0,0,0,0.10)"></i><i style="left:42.80px;top:0.0px;width:5.00px;height:4.0px;background:rgba(0,0,0,0.05)"></i><i style="left:-0.20px;top:4.0px;width:6.00px;height:6.0px;background:rgba(0,0,0,0.29)"></i><i style="left:5.80px;top:4.0px;width:5.00px;height:6.0px;background:rgba(0,0,0,0.15)"></i><i style="left:10.80px;top:4.0px;width:5.00px;height:6.0px;background:rgba(0,0,0,0.32)"></i><i style="left:15.80px;top:4.0px;width:6.00px;height:6.0px;background:rgba(0,0,0,0.23)"></i><i style="left:21.80px;top:4.0px;width:5.00px;height:6.0px;background:rgba(0,0,0,0.22)"></i><i style="left:26.80px;top:4.0px;width:5.00px;height:6.0px;background:rgba(0,0,0,0.08)"></i><i style="left:31.80px;top:4.0px;width:6.00px;height:6.0px;background:rgba(0,0,0,0.32)"></i><i style="left:37.80px;top:4.0px;width:5.00px;height:6.0px;background:rgba(0,0,0,0.19)"></i><i style="left:42.80px;top:4.0px;width:5.00px;height:6.0px;background:rgba(0,0,0,0.23)"></i><i style="left:-0.20px;top:10.0px;width:6.00px;height:6.0px;background:rgba(0,0,0,0.05)"></i><i style="left:5.80px;top:10.0px;width:5.00px;height:6.0px;background:rgba(0,0,0,0.13)"></i><i style="left:10.80px;top:10.0px;width:5.00px;height:6.0px;background:rgba(0,0,0,0.19)"></i><i style="left:15.80px;top:10.0px;width:6.00px;height:6.0px;background:rgba(0,0,0,0.08)"></i><i style="left:21.80px;top:10.0px;width:5.00px;height:6.0px;background:rgba(0,0,0,0.06)"></i><i style="left:26.80px;top:10.0px;width:5.00px;height:6.0px;background:rgba(0,0,0,0.17)"></i><i style="left:31.80px;top:10.0px;width:6.00px;height:6.0px;background:rgba(0,0,0,0.11)"></i><i style="left:37.80px;top:10.0px;width:5.00px;height:6.0px;background:rgba(0,0,0,0.07)"></i><i style="left:42.80px;top:10.0px;width:5.00px;height:6.0px;background:rgba(0,0,0,0.07)"></i></div>
<div class="mz" style="left:491.7px;top:95px;width:47.7px;height:16px"><i style="left:0.30px;top:0.0px;width:5.00px;height:4.0px;background:rgba(0,0,0,0.03)"></i><i style="left:5.30px;top:0.0px;width:5.00px;height:4.0px;background:rgba(0,0,0,0.03)"></i><i style="left:10.30px;top:0.0px;width:6.00px;height:4.0px;background:rgba(0,0,0,0.08)"></i><i style="left:16.30px;top:0.0px;width:5.00px;height:4.0px;background:rgba(0,0,0,0.05)"></i><i style="left:21.30px;top:0.0px;width:5.00px;height:4.0px;background:rgba(0,0,0,0.02)"></i><i style="left:26.30px;top:0.0px;width:6.00px;height:4.0px;background:rgba(0,0,0,0.03)"></i><i style="left:32.30px;top:0.0px;width:5.00px;height:4.0px;background:rgba(0,0,0,0.04)"></i><i style="left:37.30px;top:0.0px;width:5.00px;height:4.0px;background:rgba(0,0,0,0.07)"></i><i style="left:42.30px;top:0.0px;width:5.00px;height:4.0px;background:rgba(0,0,0,0.05)"></i><i style="left:0.30px;top:4.0px;width:5.00px;height:6.0px;background:rgba(0,0,0,0.22)"></i><i style="left:5.30px;top:4.0px;width:5.00px;height:6.0px;background:rgba(0,0,0,0.15)"></i><i style="left:10.30px;top:4.0px;width:6.00px;height:6.0px;background:rgba(0,0,0,0.25)"></i><i style="left:16.30px;top:4.0px;width:5.00px;height:6.0px;background:rgba(0,0,0,0.29)"></i><i style="left:21.30px;top:4.0px;width:5.00px;height:6.0px;background:rgba(0,0,0,0.29)"></i><i style="left:26.30px;top:4.0px;width:6.00px;height:6.0px;background:rgba(0,0,0,0.27)"></i><i style="left:32.30px;top:4.0px;width:5.00px;height:6.0px;background:rgba(0,0,0,0.30)"></i><i style="left:37.30px;top:4.0px;width:5.00px;height:6.0px;background:rgba(0,0,0,0.18)"></i><i style="left:42.30px;top:4.0px;width:5.00px;height:6.0px;background:rgba(0,0,0,0.16)"></i><i style="left:0.30px;top:10.0px;width:5.00px;height:6.0px;background:rgba(0,0,0,0.06)"></i><i style="left:5.30px;top:10.0px;width:5.00px;height:6.0px;background:rgba(0,0,0,0.08)"></i><i style="left:10.30px;top:10.0px;width:6.00px;height:6.0px;background:rgba(0,0,0,0.03)"></i><i style="left:16.30px;top:10.0px;width:5.00px;height:6.0px;background:rgba(0,0,0,0.17)"></i><i style="left:21.30px;top:10.0px;width:5.00px;height:6.0px;background:rgba(0,0,0,0.06)"></i><i style="left:26.30px;top:10.0px;width:6.00px;height:6.0px;background:rgba(0,0,0,0.10)"></i><i style="left:32.30px;top:10.0px;width:5.00px;height:6.0px;background:rgba(0,0,0,0.04)"></i><i style="left:37.30px;top:10.0px;width:5.00px;height:6.0px;background:rgba(0,0,0,0.15)"></i><i style="left:42.30px;top:10.0px;width:5.00px;height:6.0px;background:rgba(0,0,0,0.07)"></i></div>
<div class="t dg" id="r2_num" style="left:625.80px;top:98.64px;font-size:12.00px;color:#333;letter-spacing:-0.04px;">123458</div>
<div class="t" id="r2_state" style="left:758.40px;top:97.74px;font-size:12.00px;color:#333;letter-spacing:-0.60px;">有効</div>
<div class="t dg" id="r2_lic" style="left:954.00px;top:99.34px;font-size:12.00px;color:#333;">0</div>
<svg style="left:984.5px;top:102.42px" width="13" height="3" viewBox="0 0 13 3" fill="#222"><circle cx="1.4" cy="1.5" r="1.3"/><circle cx="6.5" cy="1.5" r="1.3"/><circle cx="11.6" cy="1.5" r="1.3"/></svg>
<div class="row" style="top:124.71px;height:42.07px;background:#fff"></div>
<div class="abs" style="left:0;top:124.21px;width:1015px;height:1px;background:#e8e9ec"></div>
<div class="abs" style="left:10px;top:138.69px;width:13.2px;height:13.2px;border:1.5px solid #727272;border-radius:2px"></div>
<div class="t dg" id="r3_grade" style="left:46.50px;top:140.21px;font-size:12.00px;color:#333;">1</div>
<div class="t" id="r3_class" style="left:97.10px;top:139.91px;font-size:12.00px;color:#333;letter-spacing:-0.33px;">1年1組</div>
<div class="mz" style="left:230px;top:137px;width:32px;height:16px"><i style="left:0.00px;top:0.0px;width:5.00px;height:4.0px;background:rgba(0,0,0,0.07)"></i><i style="left:5.00px;top:0.0px;width:6.00px;height:4.0px;background:rgba(0,0,0,0.07)"></i><i style="left:11.00px;top:0.0px;width:5.00px;height:4.0px;background:rgba(0,0,0,0.01)"></i><i style="left:16.00px;top:0.0px;width:5.00px;height:4.0px;background:rgba(0,0,0,0.01)"></i><i style="left:21.00px;top:0.0px;width:6.00px;height:4.0px;background:rgba(0,0,0,0.07)"></i><i style="left:27.00px;top:0.0px;width:5.00px;height:4.0px;background:rgba(0,0,0,0.03)"></i><i style="left:0.00px;top:4.0px;width:5.00px;height:6.0px;background:rgba(0,0,0,0.15)"></i><i style="left:5.00px;top:4.0px;width:6.00px;height:6.0px;background:rgba(0,0,0,0.29)"></i><i style="left:11.00px;top:4.0px;width:5.00px;height:6.0px;background:rgba(0,0,0,0.11)"></i><i style="left:16.00px;top:4.0px;width:5.00px;height:6.0px;background:rgba(0,0,0,0.12)"></i><i style="left:21.00px;top:4.0px;width:6.00px;height:6.0px;background:rgba(0,0,0,0.21)"></i><i style="left:27.00px;top:4.0px;width:5.00px;height:6.0px;background:rgba(0,0,0,0.18)"></i><i style="left:0.00px;top:10.0px;width:5.00px;height:6.0px;background:rgba(0,0,0,0.12)"></i><i style="left:5.00px;top:10.0px;width:6.00px;height:6.0px;background:rgba(0,0,0,0.05)"></i><i style="left:11.00px;top:10.0px;width:5.00px;height:6.0px;background:rgba(0,0,0,0.15)"></i><i style="left:16.00px;top:10.0px;width:5.00px;height:6.0px;background:rgba(0,0,0,0.07)"></i><i style="left:21.00px;top:10.0px;width:6.00px;height:6.0px;background:rgba(0,0,0,0.16)"></i><i style="left:27.00px;top:10.0px;width:5.00px;height:6.0px;background:rgba(0,0,0,0.07)"></i></div>
<div class="mz" style="left:363.2px;top:137px;width:48px;height:16px"><i style="left:-0.20px;top:0.0px;width:6.00px;height:4.0px;background:rgba(0,0,0,0.02)"></i><i style="left:5.80px;top:0.0px;width:5.00px;height:4.0px;background:rgba(0,0,0,0.10)"></i><i style="left:10.80px;top:0.0px;width:5.00px;height:4.0px;background:rgba(0,0,0,0.09)"></i><i style="left:15.80px;top:0.0px;width:6.00px;height:4.0px;background:rgba(0,0,0,0.08)"></i><i style="left:21.80px;top:0.0px;width:5.00px;height:4.0px;background:rgba(0,0,0,0.07)"></i><i style="left:26.80px;top:0.0px;width:5.00px;height:4.0px;background:rgba(0,0,0,0.11)"></i><i style="left:31.80px;top:0.0px;width:6.00px;height:4.0px;background:rgba(0,0,0,0.04)"></i><i style="left:37.80px;top:0.0px;width:5.00px;height:4.0px;background:rgba(0,0,0,0.09)"></i><i style="left:42.80px;top:0.0px;width:5.00px;height:4.0px;background:rgba(0,0,0,0.10)"></i><i style="left:-0.20px;top:4.0px;width:6.00px;height:6.0px;background:rgba(0,0,0,0.30)"></i><i style="left:5.80px;top:4.0px;width:5.00px;height:6.0px;background:rgba(0,0,0,0.26)"></i><i style="left:10.80px;top:4.0px;width:5.00px;height:6.0px;background:rgba(0,0,0,0.27)"></i><i style="left:15.80px;top:4.0px;width:6.00px;height:6.0px;background:rgba(0,0,0,0.09)"></i><i style="left:21.80px;top:4.0px;width:5.00px;height:6.0px;background:rgba(0,0,0,0.18)"></i><i style="left:26.80px;top:4.0px;width:5.00px;height:6.0px;background:rgba(0,0,0,0.11)"></i><i style="left:31.80px;top:4.0px;width:6.00px;height:6.0px;background:rgba(0,0,0,0.25)"></i><i style="left:37.80px;top:4.0px;width:5.00px;height:6.0px;background:rgba(0,0,0,0.16)"></i><i style="left:42.80px;top:4.0px;width:5.00px;height:6.0px;background:rgba(0,0,0,0.25)"></i><i style="left:-0.20px;top:10.0px;width:6.00px;height:6.0px;background:rgba(0,0,0,0.15)"></i><i style="left:5.80px;top:10.0px;width:5.00px;height:6.0px;background:rgba(0,0,0,0.12)"></i><i style="left:10.80px;top:10.0px;width:5.00px;height:6.0px;background:rgba(0,0,0,0.20)"></i><i style="left:15.80px;top:10.0px;width:6.00px;height:6.0px;background:rgba(0,0,0,0.15)"></i><i style="left:21.80px;top:10.0px;width:5.00px;height:6.0px;background:rgba(0,0,0,0.07)"></i><i style="left:26.80px;top:10.0px;width:5.00px;height:6.0px;background:rgba(0,0,0,0.14)"></i><i style="left:31.80px;top:10.0px;width:6.00px;height:6.0px;background:rgba(0,0,0,0.08)"></i><i style="left:37.80px;top:10.0px;width:5.00px;height:6.0px;background:rgba(0,0,0,0.04)"></i><i style="left:42.80px;top:10.0px;width:5.00px;height:6.0px;background:rgba(0,0,0,0.03)"></i></div>
<div class="mz" style="left:491.7px;top:137px;width:47.7px;height:16px"><i style="left:0.30px;top:0.0px;width:5.00px;height:4.0px;background:rgba(0,0,0,0.04)"></i><i style="left:5.30px;top:0.0px;width:5.00px;height:4.0px;background:rgba(0,0,0,0.07)"></i><i style="left:10.30px;top:0.0px;width:6.00px;height:4.0px;background:rgba(0,0,0,0.11)"></i><i style="left:16.30px;top:0.0px;width:5.00px;height:4.0px;background:rgba(0,0,0,0.11)"></i><i style="left:21.30px;top:0.0px;width:5.00px;height:4.0px;background:rgba(0,0,0,0.03)"></i><i style="left:26.30px;top:0.0px;width:6.00px;height:4.0px;background:rgba(0,0,0,0.07)"></i><i style="left:32.30px;top:0.0px;width:5.00px;height:4.0px;background:rgba(0,0,0,0.02)"></i><i style="left:37.30px;top:0.0px;width:5.00px;height:4.0px;background:rgba(0,0,0,0.03)"></i><i style="left:42.30px;top:0.0px;width:5.00px;height:4.0px;background:rgba(0,0,0,0.03)"></i><i style="left:0.30px;top:4.0px;width:5.00px;height:6.0px;background:rgba(0,0,0,0.08)"></i><i style="left:5.30px;top:4.0px;width:5.00px;height:6.0px;background:rgba(0,0,0,0.31)"></i><i style="left:10.30px;top:4.0px;width:6.00px;height:6.0px;background:rgba(0,0,0,0.22)"></i><i style="left:16.30px;top:4.0px;width:5.00px;height:6.0px;background:rgba(0,0,0,0.19)"></i><i style="left:21.30px;top:4.0px;width:5.00px;height:6.0px;background:rgba(0,0,0,0.25)"></i><i style="left:26.30px;top:4.0px;width:6.00px;height:6.0px;background:rgba(0,0,0,0.17)"></i><i style="left:32.30px;top:4.0px;width:5.00px;height:6.0px;background:rgba(0,0,0,0.06)"></i><i style="left:37.30px;top:4.0px;width:5.00px;height:6.0px;background:rgba(0,0,0,0.06)"></i><i style="left:42.30px;top:4.0px;width:5.00px;height:6.0px;background:rgba(0,0,0,0.14)"></i><i style="left:0.30px;top:10.0px;width:5.00px;height:6.0px;background:rgba(0,0,0,0.10)"></i><i style="left:5.30px;top:10.0px;width:5.00px;height:6.0px;background:rgba(0,0,0,0.06)"></i><i style="left:10.30px;top:10.0px;width:6.00px;height:6.0px;background:rgba(0,0,0,0.20)"></i><i style="left:16.30px;top:10.0px;width:5.00px;height:6.0px;background:rgba(0,0,0,0.05)"></i><i style="left:21.30px;top:10.0px;width:5.00px;height:6.0px;background:rgba(0,0,0,0.11)"></i><i style="left:26.30px;top:10.0px;width:6.00px;height:6.0px;background:rgba(0,0,0,0.20)"></i><i style="left:32.30px;top:10.0px;width:5.00px;height:6.0px;background:rgba(0,0,0,0.12)"></i><i style="left:37.30px;top:10.0px;width:5.00px;height:6.0px;background:rgba(0,0,0,0.16)"></i><i style="left:42.30px;top:10.0px;width:5.00px;height:6.0px;background:rgba(0,0,0,0.20)"></i></div>
<div class="t dg" id="r3_num" style="left:625.80px;top:140.21px;font-size:12.00px;color:#333;letter-spacing:-0.04px;">123459</div>
<div class="t" id="r3_state" style="left:758.40px;top:139.31px;font-size:12.00px;color:#333;letter-spacing:-0.60px;">有効</div>
<div class="t dg" id="r3_lic" style="left:954.00px;top:140.91px;font-size:12.00px;color:#333;">1</div>
<svg style="left:984.5px;top:144.00px" width="13" height="3" viewBox="0 0 13 3" fill="#222"><circle cx="1.4" cy="1.5" r="1.3"/><circle cx="6.5" cy="1.5" r="1.3"/><circle cx="11.6" cy="1.5" r="1.3"/></svg>
<div class="row" style="top:166.28px;height:42.07px;background:#bae6ed"></div>
<div class="abs" style="left:0;top:165.78px;width:1015px;height:1px;background:#e8e9ec"></div>
<div class="abs" style="left:10px;top:180.26px;width:13.2px;height:13.2px;background:#1a8aa5;border-radius:2px"></div>
<svg style="left:12.2px;top:182.47px" width="9" height="8" viewBox="0 0 9 8" fill="none" stroke="#fff" stroke-width="1.5" stroke-linecap="round" stroke-linejoin="round"><path d="M1 4.3L3.3 6.5L8 1.5"/></svg>
<div class="t dg" id="r4_grade" style="left:46.50px;top:181.78px;font-size:12.00px;color:#333;">1</div>
<div class="t" id="r4_class" style="left:97.10px;top:181.48px;font-size:12.00px;color:#333;letter-spacing:-0.33px;">1年1組</div>
<div class="mz" style="left:230px;top:178px;width:32px;height:16px"><i style="left:0.00px;top:0.0px;width:5.00px;height:4.0px;background:rgba(15,55,68,0.04)"></i><i style="left:5.00px;top:0.0px;width:6.00px;height:4.0px;background:rgba(15,55,68,0.11)"></i><i style="left:11.00px;top:0.0px;width:5.00px;height:4.0px;background:rgba(15,55,68,0.02)"></i><i style="left:16.00px;top:0.0px;width:5.00px;height:4.0px;background:rgba(15,55,68,0.03)"></i><i style="left:21.00px;top:0.0px;width:6.00px;height:4.0px;background:rgba(15,55,68,0.08)"></i><i style="left:27.00px;top:0.0px;width:5.00px;height:4.0px;background:rgba(15,55,68,0.08)"></i><i style="left:0.00px;top:4.0px;width:5.00px;height:6.0px;background:rgba(15,55,68,0.32)"></i><i style="left:5.00px;top:4.0px;width:6.00px;height:6.0px;background:rgba(15,55,68,0.38)"></i><i style="left:11.00px;top:4.0px;width:5.00px;height:6.0px;background:rgba(15,55,68,0.45)"></i><i style="left:16.00px;top:4.0px;width:5.00px;height:6.0px;background:rgba(15,55,68,0.37)"></i><i style="left:21.00px;top:4.0px;width:6.00px;height:6.0px;background:rgba(15,55,68,0.18)"></i><i style="left:27.00px;top:4.0px;width:5.00px;height:6.0px;background:rgba(15,55,68,0.39)"></i><i style="left:0.00px;top:10.0px;width:5.00px;height:6.0px;background:rgba(15,55,68,0.13)"></i><i style="left:5.00px;top:10.0px;width:6.00px;height:6.0px;background:rgba(15,55,68,0.21)"></i><i style="left:11.00px;top:10.0px;width:5.00px;height:6.0px;background:rgba(15,55,68,0.19)"></i><i style="left:16.00px;top:10.0px;width:5.00px;height:6.0px;background:rgba(15,55,68,0.22)"></i><i style="left:21.00px;top:10.0px;width:6.00px;height:6.0px;background:rgba(15,55,68,0.11)"></i><i style="left:27.00px;top:10.0px;width:5.00px;height:6.0px;background:rgba(15,55,68,0.26)"></i></div>
<div class="mz" style="left:363.2px;top:178px;width:48px;height:16px"><i style="left:-0.20px;top:0.0px;width:6.00px;height:4.0px;background:rgba(15,55,68,0.01)"></i><i style="left:5.80px;top:0.0px;width:5.00px;height:4.0px;background:rgba(15,55,68,0.06)"></i><i style="left:10.80px;top:0.0px;width:5.00px;height:4.0px;background:rgba(15,55,68,0.04)"></i><i style="left:15.80px;top:0.0px;width:6.00px;height:4.0px;background:rgba(15,55,68,0.03)"></i><i style="left:21.80px;top:0.0px;width:5.00px;height:4.0px;background:rgba(15,55,68,0.03)"></i><i style="left:26.80px;top:0.0px;width:5.00px;height:4.0px;background:rgba(15,55,68,0.10)"></i><i style="left:31.80px;top:0.0px;width:6.00px;height:4.0px;background:rgba(15,55,68,0.07)"></i><i style="left:37.80px;top:0.0px;width:5.00px;height:4.0px;background:rgba(15,55,68,0.05)"></i><i style="left:42.80px;top:0.0px;width:5.00px;height:4.0px;background:rgba(15,55,68,0.12)"></i><i style="left:-0.20px;top:4.0px;width:6.00px;height:6.0px;background:rgba(15,55,68,0.06)"></i><i style="left:5.80px;top:4.0px;width:5.00px;height:6.0px;background:rgba(15,55,68,0.39)"></i><i style="left:10.80px;top:4.0px;width:5.00px;height:6.0px;background:rgba(15,55,68,0.38)"></i><i style="left:15.80px;top:4.0px;width:6.00px;height:6.0px;background:rgba(15,55,68,0.28)"></i><i style="left:21.80px;top:4.0px;width:5.00px;height:6.0px;background:rgba(15,55,68,0.39)"></i><i style="left:26.80px;top:4.0px;width:5.00px;height:6.0px;background:rgba(15,55,68,0.35)"></i><i style="left:31.80px;top:4.0px;width:6.00px;height:6.0px;background:rgba(15,55,68,0.25)"></i><i style="left:37.80px;top:4.0px;width:5.00px;height:6.0px;background:rgba(15,55,68,0.37)"></i><i style="left:42.80px;top:4.0px;width:5.00px;height:6.0px;background:rgba(15,55,68,0.28)"></i><i style="left:-0.20px;top:10.0px;width:6.00px;height:6.0px;background:rgba(15,55,68,0.07)"></i><i style="left:5.80px;top:10.0px;width:5.00px;height:6.0px;background:rgba(15,55,68,0.02)"></i><i style="left:10.80px;top:10.0px;width:5.00px;height:6.0px;background:rgba(15,55,68,0.18)"></i><i style="left:15.80px;top:10.0px;width:6.00px;height:6.0px;background:rgba(15,55,68,0.21)"></i><i style="left:21.80px;top:10.0px;width:5.00px;height:6.0px;background:rgba(15,55,68,0.08)"></i><i style="left:26.80px;top:10.0px;width:5.00px;height:6.0px;background:rgba(15,55,68,0.10)"></i><i style="left:31.80px;top:10.0px;width:6.00px;height:6.0px;background:rgba(15,55,68,0.07)"></i><i style="left:37.80px;top:10.0px;width:5.00px;height:6.0px;background:rgba(15,55,68,0.22)"></i><i style="left:42.80px;top:10.0px;width:5.00px;height:6.0px;background:rgba(15,55,68,0.04)"></i></div>
<div class="mz" style="left:491.7px;top:178px;width:47.7px;height:16px"><i style="left:0.30px;top:0.0px;width:5.00px;height:4.0px;background:rgba(15,55,68,0.07)"></i><i style="left:5.30px;top:0.0px;width:5.00px;height:4.0px;background:rgba(15,55,68,0.02)"></i><i style="left:10.30px;top:0.0px;width:6.00px;height:4.0px;background:rgba(15,55,68,0.12)"></i><i style="left:16.30px;top:0.0px;width:5.00px;height:4.0px;background:rgba(15,55,68,0.15)"></i><i style="left:21.30px;top:0.0px;width:5.00px;height:4.0px;background:rgba(15,55,68,0.15)"></i><i style="left:26.30px;top:0.0px;width:6.00px;height:4.0px;background:rgba(15,55,68,0.13)"></i><i style="left:32.30px;top:0.0px;width:5.00px;height:4.0px;background:rgba(15,55,68,0.06)"></i><i style="left:37.30px;top:0.0px;width:5.00px;height:4.0px;background:rgba(15,55,68,0.15)"></i><i style="left:42.30px;top:0.0px;width:5.00px;height:4.0px;background:rgba(15,55,68,0.05)"></i><i style="left:0.30px;top:4.0px;width:5.00px;height:6.0px;background:rgba(15,55,68,0.26)"></i><i style="left:5.30px;top:4.0px;width:5.00px;height:6.0px;background:rgba(15,55,68,0.27)"></i><i style="left:10.30px;top:4.0px;width:6.00px;height:6.0px;background:rgba(15,55,68,0.21)"></i><i style="left:16.30px;top:4.0px;width:5.00px;height:6.0px;background:rgba(15,55,68,0.39)"></i><i style="left:21.30px;top:4.0px;width:5.00px;height:6.0px;background:rgba(15,55,68,0.40)"></i><i style="left:26.30px;top:4.0px;width:6.00px;height:6.0px;background:rgba(15,55,68,0.20)"></i><i style="left:32.30px;top:4.0px;width:5.00px;height:6.0px;background:rgba(15,55,68,0.41)"></i><i style="left:37.30px;top:4.0px;width:5.00px;height:6.0px;background:rgba(15,55,68,0.16)"></i><i style="left:42.30px;top:4.0px;width:5.00px;height:6.0px;background:rgba(15,55,68,0.31)"></i><i style="left:0.30px;top:10.0px;width:5.00px;height:6.0px;background:rgba(15,55,68,0.27)"></i><i style="left:5.30px;top:10.0px;width:5.00px;height:6.0px;background:rgba(15,55,68,0.08)"></i><i style="left:10.30px;top:10.0px;width:6.00px;height:6.0px;background:rgba(15,55,68,0.18)"></i><i style="left:16.30px;top:10.0px;width:5.00px;height:6.0px;background:rgba(15,55,68,0.02)"></i><i style="left:21.30px;top:10.0px;width:5.00px;height:6.0px;background:rgba(15,55,68,0.22)"></i><i style="left:26.30px;top:10.0px;width:6.00px;height:6.0px;background:rgba(15,55,68,0.07)"></i><i style="left:32.30px;top:10.0px;width:5.00px;height:6.0px;background:rgba(15,55,68,0.08)"></i><i style="left:37.30px;top:10.0px;width:5.00px;height:6.0px;background:rgba(15,55,68,0.20)"></i><i style="left:42.30px;top:10.0px;width:5.00px;height:6.0px;background:rgba(15,55,68,0.10)"></i></div>
<div class="t dg" id="r4_num" style="left:625.80px;top:181.78px;font-size:12.00px;color:#333;letter-spacing:-0.04px;">123460</div>
<div class="t" id="r4_state" style="left:758.40px;top:180.88px;font-size:12.00px;color:#333;letter-spacing:-0.60px;">有効</div>
<div class="t dg" id="r4_lic" style="left:954.00px;top:182.48px;font-size:12.00px;color:#333;">0</div>
<svg style="left:984.5px;top:185.56px" width="13" height="3" viewBox="0 0 13 3" fill="#222"><circle cx="1.4" cy="1.5" r="1.3"/><circle cx="6.5" cy="1.5" r="1.3"/><circle cx="11.6" cy="1.5" r="1.3"/></svg>
<div class="row" style="top:207.85px;height:42.07px;background:#fff"></div>
<div class="abs" style="left:0;top:207.35px;width:1015px;height:1px;background:#c9dbe6"></div>
<div class="abs" style="left:10px;top:221.83px;width:13.2px;height:13.2px;border:1.5px solid #727272;border-radius:2px"></div>
<div class="t dg" id="r5_grade" style="left:46.50px;top:223.35px;font-size:12.00px;color:#333;">1</div>
<div class="t" id="r5_class" style="left:97.10px;top:223.05px;font-size:12.00px;color:#333;letter-spacing:-0.33px;">1年1組</div>
<div class="mz" style="left:230px;top:220px;width:32px;height:16px"><i style="left:0.00px;top:0.0px;width:5.00px;height:4.0px;background:rgba(0,0,0,0.07)"></i><i style="left:5.00px;top:0.0px;width:6.00px;height:4.0px;background:rgba(0,0,0,0.05)"></i><i style="left:11.00px;top:0.0px;width:5.00px;height:4.0px;background:rgba(0,0,0,0.11)"></i><i style="left:16.00px;top:0.0px;width:5.00px;height:4.0px;background:rgba(0,0,0,0.06)"></i><i style="left:21.00px;top:0.0px;width:6.00px;height:4.0px;background:rgba(0,0,0,0.09)"></i><i style="left:27.00px;top:0.0px;width:5.00px;height:4.0px;background:rgba(0,0,0,0.11)"></i><i style="left:0.00px;top:4.0px;width:5.00px;height:6.0px;background:rgba(0,0,0,0.29)"></i><i style="left:5.00px;top:4.0px;width:6.00px;height:6.0px;background:rgba(0,0,0,0.29)"></i><i style="left:11.00px;top:4.0px;width:5.00px;height:6.0px;background:rgba(0,0,0,0.29)"></i><i style="left:16.00px;top:4.0px;width:5.00px;height:6.0px;background:rgba(0,0,0,0.31)"></i><i style="left:21.00px;top:4.0px;width:6.00px;height:6.0px;background:rgba(0,0,0,0.22)"></i><i style="left:27.00px;top:4.0px;width:5.00px;height:6.0px;background:rgba(0,0,0,0.28)"></i><i style="left:0.00px;top:10.0px;width:5.00px;height:6.0px;background:rgba(0,0,0,0.04)"></i><i style="left:5.00px;top:10.0px;width:6.00px;height:6.0px;background:rgba(0,0,0,0.16)"></i><i style="left:11.00px;top:10.0px;width:5.00px;height:6.0px;background:rgba(0,0,0,0.10)"></i><i style="left:16.00px;top:10.0px;width:5.00px;height:6.0px;background:rgba(0,0,0,0.07)"></i><i style="left:21.00px;top:10.0px;width:6.00px;height:6.0px;background:rgba(0,0,0,0.08)"></i><i style="left:27.00px;top:10.0px;width:5.00px;height:6.0px;background:rgba(0,0,0,0.05)"></i></div>
<div class="mz" style="left:363.2px;top:220px;width:48px;height:16px"><i style="left:-0.20px;top:0.0px;width:6.00px;height:4.0px;background:rgba(0,0,0,0.03)"></i><i style="left:5.80px;top:0.0px;width:5.00px;height:4.0px;background:rgba(0,0,0,0.09)"></i><i style="left:10.80px;top:0.0px;width:5.00px;height:4.0px;background:rgba(0,0,0,0.02)"></i><i style="left:15.80px;top:0.0px;width:6.00px;height:4.0px;background:rgba(0,0,0,0.07)"></i><i style="left:21.80px;top:0.0px;width:5.00px;height:4.0px;background:rgba(0,0,0,0.01)"></i><i style="left:26.80px;top:0.0px;width:5.00px;height:4.0px;background:rgba(0,0,0,0.03)"></i><i style="left:31.80px;top:0.0px;width:6.00px;height:4.0px;background:rgba(0,0,0,0.04)"></i><i style="left:37.80px;top:0.0px;width:5.00px;height:4.0px;background:rgba(0,0,0,0.07)"></i><i style="left:42.80px;top:0.0px;width:5.00px;height:4.0px;background:rgba(0,0,0,0.03)"></i><i style="left:-0.20px;top:4.0px;width:6.00px;height:6.0px;background:rgba(0,0,0,0.15)"></i><i style="left:5.80px;top:4.0px;width:5.00px;height:6.0px;background:rgba(0,0,0,0.18)"></i><i style="left:10.80px;top:4.0px;width:5.00px;height:6.0px;background:rgba(0,0,0,0.28)"></i><i style="left:15.80px;top:4.0px;width:6.00px;height:6.0px;background:rgba(0,0,0,0.16)"></i><i style="left:21.80px;top:4.0px;width:5.00px;height:6.0px;background:rgba(0,0,0,0.31)"></i><i style="left:26.80px;top:4.0px;width:5.00px;height:6.0px;background:rgba(0,0,0,0.23)"></i><i style="left:31.80px;top:4.0px;width:6.00px;height:6.0px;background:rgba(0,0,0,0.21)"></i><i style="left:37.80px;top:4.0px;width:5.00px;height:6.0px;background:rgba(0,0,0,0.12)"></i><i style="left:42.80px;top:4.0px;width:5.00px;height:6.0px;background:rgba(0,0,0,0.28)"></i><i style="left:-0.20px;top:10.0px;width:6.00px;height:6.0px;background:rgba(0,0,0,0.12)"></i><i style="left:5.80px;top:10.0px;width:5.00px;height:6.0px;background:rgba(0,0,0,0.08)"></i><i style="left:10.80px;top:10.0px;width:5.00px;height:6.0px;background:rgba(0,0,0,0.14)"></i><i style="left:15.80px;top:10.0px;width:6.00px;height:6.0px;background:rgba(0,0,0,0.04)"></i><i style="left:21.80px;top:10.0px;width:5.00px;height:6.0px;background:rgba(0,0,0,0.10)"></i><i style="left:26.80px;top:10.0px;width:5.00px;height:6.0px;background:rgba(0,0,0,0.15)"></i><i style="left:31.80px;top:10.0px;width:6.00px;height:6.0px;background:rgba(0,0,0,0.06)"></i><i style="left:37.80px;top:10.0px;width:5.00px;height:6.0px;background:rgba(0,0,0,0.09)"></i><i style="left:42.80px;top:10.0px;width:5.00px;height:6.0px;background:rgba(0,0,0,0.18)"></i></div>
<div class="mz" style="left:491.7px;top:220px;width:47.7px;height:16px"><i style="left:0.30px;top:0.0px;width:5.00px;height:4.0px;background:rgba(0,0,0,0.08)"></i><i style="left:5.30px;top:0.0px;width:5.00px;height:4.0px;background:rgba(0,0,0,0.04)"></i><i style="left:10.30px;top:0.0px;width:6.00px;height:4.0px;background:rgba(0,0,0,0.03)"></i><i style="left:16.30px;top:0.0px;width:5.00px;height:4.0px;background:rgba(0,0,0,0.01)"></i><i style="left:21.30px;top:0.0px;width:5.00px;height:4.0px;background:rgba(0,0,0,0.10)"></i><i style="left:26.30px;top:0.0px;width:6.00px;height:4.0px;background:rgba(0,0,0,0.02)"></i><i style="left:32.30px;top:0.0px;width:5.00px;height:4.0px;background:rgba(0,0,0,0.03)"></i><i style="left:37.30px;top:0.0px;width:5.00px;height:4.0px;background:rgba(0,0,0,0.06)"></i><i style="left:42.30px;top:0.0px;width:5.00px;height:4.0px;background:rgba(0,0,0,0.11)"></i><i style="left:0.30px;top:4.0px;width:5.00px;height:6.0px;background:rgba(0,0,0,0.29)"></i><i style="left:5.30px;top:4.0px;width:5.00px;height:6.0px;background:rgba(0,0,0,0.28)"></i><i style="left:10.30px;top:4.0px;width:6.00px;height:6.0px;background:rgba(0,0,0,0.11)"></i><i style="left:16.30px;top:4.0px;width:5.00px;height:6.0px;background:rgba(0,0,0,0.29)"></i><i style="left:21.30px;top:4.0px;width:5.00px;height:6.0px;background:rgba(0,0,0,0.23)"></i><i style="left:26.30px;top:4.0px;width:6.00px;height:6.0px;background:rgba(0,0,0,0.14)"></i><i style="left:32.30px;top:4.0px;width:5.00px;height:6.0px;background:rgba(0,0,0,0.18)"></i><i style="left:37.30px;top:4.0px;width:5.00px;height:6.0px;background:rgba(0,0,0,0.12)"></i><i style="left:42.30px;top:4.0px;width:5.00px;height:6.0px;background:rgba(0,0,0,0.21)"></i><i style="left:0.30px;top:10.0px;width:5.00px;height:6.0px;background:rgba(0,0,0,0.10)"></i><i style="left:5.30px;top:10.0px;width:5.00px;height:6.0px;background:rgba(0,0,0,0.05)"></i><i style="left:10.30px;top:10.0px;width:6.00px;height:6.0px;background:rgba(0,0,0,0.11)"></i><i style="left:16.30px;top:10.0px;width:5.00px;height:6.0px;background:rgba(0,0,0,0.17)"></i><i style="left:21.30px;top:10.0px;width:5.00px;height:6.0px;background:rgba(0,0,0,0.04)"></i><i style="left:26.30px;top:10.0px;width:6.00px;height:6.0px;background:rgba(0,0,0,0.15)"></i><i style="left:32.30px;top:10.0px;width:5.00px;height:6.0px;background:rgba(0,0,0,0.13)"></i><i style="left:37.30px;top:10.0px;width:5.00px;height:6.0px;background:rgba(0,0,0,0.04)"></i><i style="left:42.30px;top:10.0px;width:5.00px;height:6.0px;background:rgba(0,0,0,0.17)"></i></div>
<div class="t dg" id="r5_num" style="left:625.80px;top:223.35px;font-size:12.00px;color:#333;letter-spacing:-0.04px;">123461</div>
<div class="t" id="r5_state" style="left:758.40px;top:222.45px;font-size:12.00px;color:#333;letter-spacing:-0.60px;">有効</div>
<div class="t dg" id="r5_lic" style="left:954.00px;top:224.05px;font-size:12.00px;color:#333;">0</div>
<svg style="left:984.5px;top:227.13px" width="13" height="3" viewBox="0 0 13 3" fill="#222"><circle cx="1.4" cy="1.5" r="1.3"/><circle cx="6.5" cy="1.5" r="1.3"/><circle cx="11.6" cy="1.5" r="1.3"/></svg>
<div class="row" style="top:249.42px;height:42.07px;background:#fff"></div>
<div class="abs" style="left:0;top:248.92px;width:1015px;height:1px;background:#e8e9ec"></div>
<div class="abs" style="left:10px;top:263.41px;width:13.2px;height:13.2px;border:1.5px solid #727272;border-radius:2px"></div>
<div class="t dg" id="r6_grade" style="left:46.50px;top:264.92px;font-size:12.00px;color:#333;">1</div>
<div class="t" id="r6_class" style="left:97.10px;top:264.62px;font-size:12.00px;color:#333;letter-spacing:-0.33px;">1年1組</div>
<div class="mz" style="left:230px;top:261px;width:32px;height:16px"><i style="left:0.00px;top:0.0px;width:5.00px;height:4.0px;background:rgba(0,0,0,0.08)"></i><i style="left:5.00px;top:0.0px;width:6.00px;height:4.0px;background:rgba(0,0,0,0.05)"></i><i style="left:11.00px;top:0.0px;width:5.00px;height:4.0px;background:rgba(0,0,0,0.04)"></i><i style="left:16.00px;top:0.0px;width:5.00px;height:4.0px;background:rgba(0,0,0,0.05)"></i><i style="left:21.00px;top:0.0px;width:6.00px;height:4.0px;background:rgba(0,0,0,0.04)"></i><i style="left:27.00px;top:0.0px;width:5.00px;height:4.0px;background:rgba(0,0,0,0.09)"></i><i style="left:0.00px;top:4.0px;width:5.00px;height:6.0px;background:rgba(0,0,0,0.31)"></i><i style="left:5.00px;top:4.0px;width:6.00px;height:6.0px;background:rgba(0,0,0,0.26)"></i><i style="left:11.00px;top:4.0px;width:5.00px;height:6.0px;background:rgba(0,0,0,0.10)"></i><i style="left:16.00px;top:4.0px;width:5.00px;height:6.0px;background:rgba(0,0,0,0.05)"></i><i style="left:21.00px;top:4.0px;width:6.00px;height:6.0px;background:rgba(0,0,0,0.25)"></i><i style="left:27.00px;top:4.0px;width:5.00px;height:6.0px;background:rgba(0,0,0,0.15)"></i><i style="left:0.00px;top:10.0px;width:5.00px;height:6.0px;background:rgba(0,0,0,0.17)"></i><i style="left:5.00px;top:10.0px;width:6.00px;height:6.0px;background:rgba(0,0,0,0.05)"></i><i style="left:11.00px;top:10.0px;width:5.00px;height:6.0px;background:rgba(0,0,0,0.02)"></i><i style="left:16.00px;top:10.0px;width:5.00px;height:6.0px;background:rgba(0,0,0,0.04)"></i><i style="left:21.00px;top:10.0px;width:6.00px;height:6.0px;background:rgba(0,0,0,0.19)"></i><i style="left:27.00px;top:10.0px;width:5.00px;height:6.0px;background:rgba(0,0,0,0.12)"></i></div>
<div class="mz" style="left:363.2px;top:261px;width:48px;height:16px"><i style="left:-0.20px;top:0.0px;width:6.00px;height:4.0px;background:rgba(0,0,0,0.09)"></i><i style="left:5.80px;top:0.0px;width:5.00px;height:4.0px;background:rgba(0,0,0,0.05)"></i><i style="left:10.80px;top:0.0px;width:5.00px;height:4.0px;background:rgba(0,0,0,0.02)"></i><i style="left:15.80px;top:0.0px;width:6.00px;height:4.0px;background:rgba(0,0,0,0.05)"></i><i style="left:21.80px;top:0.0px;width:5.00px;height:4.0px;background:rgba(0,0,0,0.11)"></i><i style="left:26.80px;top:0.0px;width:5.00px;height:4.0px;background:rgba(0,0,0,0.08)"></i><i style="left:31.80px;top:0.0px;width:6.00px;height:4.0px;background:rgba(0,0,0,0.02)"></i><i style="left:37.80px;top:0.0px;width:5.00px;height:4.0px;background:rgba(0,0,0,0.05)"></i><i style="left:42.80px;top:0.0px;width:5.00px;height:4.0px;background:rgba(0,0,0,0.03)"></i><i style="left:-0.20px;top:4.0px;width:6.00px;height:6.0px;background:rgba(0,0,0,0.22)"></i><i style="left:5.80px;top:4.0px;width:5.00px;height:6.0px;background:rgba(0,0,0,0.29)"></i><i style="left:10.80px;top:4.0px;width:5.00px;height:6.0px;background:rgba(0,0,0,0.14)"></i><i style="left:15.80px;top:4.0px;width:6.00px;height:6.0px;background:rgba(0,0,0,0.30)"></i><i style="left:21.80px;top:4.0px;width:5.00px;height:6.0px;background:rgba(0,0,0,0.18)"></i><i style="left:26.80px;top:4.0px;width:5.00px;height:6.0px;background:rgba(0,0,0,0.14)"></i><i style="left:31.80px;top:4.0px;width:6.00px;height:6.0px;background:rgba(0,0,0,0.32)"></i><i style="left:37.80px;top:4.0px;width:5.00px;height:6.0px;background:rgba(0,0,0,0.26)"></i><i style="left:42.80px;top:4.0px;width:5.00px;height:6.0px;background:rgba(0,0,0,0.15)"></i><i style="left:-0.20px;top:10.0px;width:6.00px;height:6.0px;background:rgba(0,0,0,0.14)"></i><i style="left:5.80px;top:10.0px;width:5.00px;height:6.0px;background:rgba(0,0,0,0.05)"></i><i style="left:10.80px;top:10.0px;width:5.00px;height:6.0px;background:rgba(0,0,0,0.13)"></i><i style="left:15.80px;top:10.0px;width:6.00px;height:6.0px;background:rgba(0,0,0,0.09)"></i><i style="left:21.80px;top:10.0px;width:5.00px;height:6.0px;background:rgba(0,0,0,0.10)"></i><i style="left:26.80px;top:10.0px;width:5.00px;height:6.0px;background:rgba(0,0,0,0.06)"></i><i style="left:31.80px;top:10.0px;width:6.00px;height:6.0px;background:rgba(0,0,0,0.06)"></i><i style="left:37.80px;top:10.0px;width:5.00px;height:6.0px;background:rgba(0,0,0,0.13)"></i><i style="left:42.80px;top:10.0px;width:5.00px;height:6.0px;background:rgba(0,0,0,0.13)"></i></div>
<div class="mz" style="left:491.7px;top:261px;width:47.7px;height:16px"><i style="left:0.30px;top:0.0px;width:5.00px;height:4.0px;background:rgba(0,0,0,0.11)"></i><i style="left:5.30px;top:0.0px;width:5.00px;height:4.0px;background:rgba(0,0,0,0.10)"></i><i style="left:10.30px;top:0.0px;width:6.00px;height:4.0px;background:rgba(0,0,0,0.03)"></i><i style="left:16.30px;top:0.0px;width:5.00px;height:4.0px;background:rgba(0,0,0,0.04)"></i><i style="left:21.30px;top:0.0px;width:5.00px;height:4.0px;background:rgba(0,0,0,0.04)"></i><i style="left:26.30px;top:0.0px;width:6.00px;height:4.0px;background:rgba(0,0,0,0.10)"></i><i style="left:32.30px;top:0.0px;width:5.00px;height:4.0px;background:rgba(0,0,0,0.02)"></i><i style="left:37.30px;top:0.0px;width:5.00px;height:4.0px;background:rgba(0,0,0,0.02)"></i><i style="left:42.30px;top:0.0px;width:5.00px;height:4.0px;background:rgba(0,0,0,0.11)"></i><i style="left:0.30px;top:4.0px;width:5.00px;height:6.0px;background:rgba(0,0,0,0.25)"></i><i style="left:5.30px;top:4.0px;width:5.00px;height:6.0px;background:rgba(0,0,0,0.25)"></i><i style="left:10.30px;top:4.0px;width:6.00px;height:6.0px;background:rgba(0,0,0,0.19)"></i><i style="left:16.30px;top:4.0px;width:5.00px;height:6.0px;background:rgba(0,0,0,0.10)"></i><i style="left:21.30px;top:4.0px;width:5.00px;height:6.0px;background:rgba(0,0,0,0.15)"></i><i style="left:26.30px;top:4.0px;width:6.00px;height:6.0px;background:rgba(0,0,0,0.14)"></i><i style="left:32.30px;top:4.0px;width:5.00px;height:6.0px;background:rgba(0,0,0,0.23)"></i><i style="left:37.30px;top:4.0px;width:5.00px;height:6.0px;background:rgba(0,0,0,0.22)"></i><i style="left:42.30px;top:4.0px;width:5.00px;height:6.0px;background:rgba(0,0,0,0.23)"></i><i style="left:0.30px;top:10.0px;width:5.00px;height:6.0px;background:rgba(0,0,0,0.05)"></i><i style="left:5.30px;top:10.0px;width:5.00px;height:6.0px;background:rgba(0,0,0,0.05)"></i><i style="left:10.30px;top:10.0px;width:6.00px;height:6.0px;background:rgba(0,0,0,0.19)"></i><i style="left:16.30px;top:10.0px;width:5.00px;height:6.0px;background:rgba(0,0,0,0.11)"></i><i style="left:21.30px;top:10.0px;width:5.00px;height:6.0px;background:rgba(0,0,0,0.14)"></i><i style="left:26.30px;top:10.0px;width:6.00px;height:6.0px;background:rgba(0,0,0,0.16)"></i><i style="left:32.30px;top:10.0px;width:5.00px;height:6.0px;background:rgba(0,0,0,0.12)"></i><i style="left:37.30px;top:10.0px;width:5.00px;height:6.0px;background:rgba(0,0,0,0.17)"></i><i style="left:42.30px;top:10.0px;width:5.00px;height:6.0px;background:rgba(0,0,0,0.10)"></i></div>
<div class="t dg" id="r6_num" style="left:625.80px;top:264.92px;font-size:12.00px;color:#333;letter-spacing:-0.04px;">123462</div>
<div class="t" id="r6_state" style="left:758.40px;top:264.02px;font-size:12.00px;color:#333;letter-spacing:-0.60px;">有効</div>
<div class="t dg" id="r6_lic" style="left:954.00px;top:265.62px;font-size:12.00px;color:#333;">0</div>
<svg style="left:984.5px;top:268.71px" width="13" height="3" viewBox="0 0 13 3" fill="#222"><circle cx="1.4" cy="1.5" r="1.3"/><circle cx="6.5" cy="1.5" r="1.3"/><circle cx="11.6" cy="1.5" r="1.3"/></svg>
<div class="row" style="top:290.99px;height:42.07px;background:#fff"></div>
<div class="abs" style="left:0;top:290.49px;width:1015px;height:1px;background:#e8e9ec"></div>
<div class="abs" style="left:10px;top:304.98px;width:13.2px;height:13.2px;border:1.5px solid #727272;border-radius:2px"></div>
<div class="t dg" id="r7_grade" style="left:46.50px;top:306.49px;font-size:12.00px;color:#333;">1</div>
<div class="t" id="r7_class" style="left:97.10px;top:306.19px;font-size:12.00px;color:#333;letter-spacing:-0.33px;">1年1組</div>
<div class="mz" style="left:230px;top:303px;width:32px;height:16px"><i style="left:0.00px;top:0.0px;width:5.00px;height:4.0px;background:rgba(0,0,0,0.07)"></i><i style="left:5.00px;top:0.0px;width:6.00px;height:4.0px;background:rgba(0,0,0,0.07)"></i><i style="left:11.00px;top:0.0px;width:5.00px;height:4.0px;background:rgba(0,0,0,0.06)"></i><i style="left:16.00px;top:0.0px;width:5.00px;height:4.0px;background:rgba(0,0,0,0.02)"></i><i style="left:21.00px;top:0.0px;width:6.00px;height:4.0px;background:rgba(0,0,0,0.09)"></i><i style="left:27.00px;top:0.0px;width:5.00px;height:4.0px;background:rgba(0,0,0,0.09)"></i><i style="left:0.00px;top:4.0px;width:5.00px;height:6.0px;background:rgba(0,0,0,0.27)"></i><i style="left:5.00px;top:4.0px;width:6.00px;height:6.0px;background:rgba(0,0,0,0.08)"></i><i style="left:11.00px;top:4.0px;width:5.00px;height:6.0px;background:rgba(0,0,0,0.13)"></i><i style="left:16.00px;top:4.0px;width:5.00px;height:6.0px;background:rgba(0,0,0,0.22)"></i><i style="left:21.00px;top:4.0px;width:6.00px;height:6.0px;background:rgba(0,0,0,0.12)"></i><i style="left:27.00px;top:4.0px;width:5.00px;height:6.0px;background:rgba(0,0,0,0.22)"></i><i style="left:0.00px;top:10.0px;width:5.00px;height:6.0px;background:rgba(0,0,0,0.09)"></i><i style="left:5.00px;top:10.0px;width:6.00px;height:6.0px;background:rgba(0,0,0,0.03)"></i><i style="left:11.00px;top:10.0px;width:5.00px;height:6.0px;background:rgba(0,0,0,0.19)"></i><i style="left:16.00px;top:10.0px;width:5.00px;height:6.0px;background:rgba(0,0,0,0.15)"></i><i style="left:21.00px;top:10.0px;width:6.00px;height:6.0px;background:rgba(0,0,0,0.11)"></i><i style="left:27.00px;top:10.0px;width:5.00px;height:6.0px;background:rgba(0,0,0,0.07)"></i></div>
<div class="mz" style="left:363.2px;top:303px;width:48px;height:16px"><i style="left:-0.20px;top:0.0px;width:6.00px;height:4.0px;background:rgba(0,0,0,0.07)"></i><i style="left:5.80px;top:0.0px;width:5.00px;height:4.0px;background:rgba(0,0,0,0.02)"></i><i style="left:10.80px;top:0.0px;width:5.00px;height:4.0px;background:rgba(0,0,0,0.03)"></i><i style="left:15.80px;top:0.0px;width:6.00px;height:4.0px;background:rgba(0,0,0,0.04)"></i><i style="left:21.80px;top:0.0px;width:5.00px;height:4.0px;background:rgba(0,0,0,0.04)"></i><i style="left:26.80px;top:0.0px;width:5.00px;height:4.0px;background:rgba(0,0,0,0.02)"></i><i style="left:31.80px;top:0.0px;width:6.00px;height:4.0px;background:rgba(0,0,0,0.10)"></i><i style="left:37.80px;top:0.0px;width:5.00px;height:4.0px;background:rgba(0,0,0,0.05)"></i><i style="left:42.80px;top:0.0px;width:5.00px;height:4.0px;background:rgba(0,0,0,0.03)"></i><i style="left:-0.20px;top:4.0px;width:6.00px;height:6.0px;background:rgba(0,0,0,0.11)"></i><i style="left:5.80px;top:4.0px;width:5.00px;height:6.0px;background:rgba(0,0,0,0.17)"></i><i style="left:10.80px;top:4.0px;width:5.00px;height:6.0px;background:rgba(0,0,0,0.31)"></i><i style="left:15.80px;top:4.0px;width:6.00px;height:6.0px;background:rgba(0,0,0,0.21)"></i><i style="left:21.80px;top:4.0px;width:5.00px;height:6.0px;background:rgba(0,0,0,0.17)"></i><i style="left:26.80px;top:4.0px;width:5.00px;height:6.0px;background:rgba(0,0,0,0.30)"></i><i style="left:31.80px;top:4.0px;width:6.00px;height:6.0px;background:rgba(0,0,0,0.29)"></i><i style="left:37.80px;top:4.0px;width:5.00px;height:6.0px;background:rgba(0,0,0,0.21)"></i><i style="left:42.80px;top:4.0px;width:5.00px;height:6.0px;background:rgba(0,0,0,0.30)"></i><i style="left:-0.20px;top:10.0px;width:6.00px;height:6.0px;background:rgba(0,0,0,0.07)"></i><i style="left:5.80px;top:10.0px;width:5.00px;height:6.0px;background:rgba(0,0,0,0.07)"></i><i style="left:10.80px;top:10.0px;width:5.00px;height:6.0px;background:rgba(0,0,0,0.02)"></i><i style="left:15.80px;top:10.0px;width:6.00px;height:6.0px;background:rgba(0,0,0,0.16)"></i><i style="left:21.80px;top:10.0px;width:5.00px;height:6.0px;background:rgba(0,0,0,0.19)"></i><i style="left:26.80px;top:10.0px;width:5.00px;height:6.0px;background:rgba(0,0,0,0.05)"></i><i style="left:31.80px;top:10.0px;width:6.00px;height:6.0px;background:rgba(0,0,0,0.15)"></i><i style="left:37.80px;top:10.0px;width:5.00px;height:6.0px;background:rgba(0,0,0,0.04)"></i><i style="left:42.80px;top:10.0px;width:5.00px;height:6.0px;background:rgba(0,0,0,0.07)"></i></div>
<div class="mz" style="left:491.7px;top:303px;width:47.7px;height:16px"><i style="left:0.30px;top:0.0px;width:5.00px;height:4.0px;background:rgba(0,0,0,0.09)"></i><i style="left:5.30px;top:0.0px;width:5.00px;height:4.0px;background:rgba(0,0,0,0.03)"></i><i style="left:10.30px;top:0.0px;width:6.00px;height:4.0px;background:rgba(0,0,0,0.08)"></i><i style="left:16.30px;top:0.0px;width:5.00px;height:4.0px;background:rgba(0,0,0,0.05)"></i><i style="left:21.30px;top:0.0px;width:5.00px;height:4.0px;background:rgba(0,0,0,0.10)"></i><i style="left:26.30px;top:0.0px;width:6.00px;height:4.0px;background:rgba(0,0,0,0.04)"></i><i style="left:32.30px;top:0.0px;width:5.00px;height:4.0px;background:rgba(0,0,0,0.11)"></i><i style="left:37.30px;top:0.0px;width:5.00px;height:4.0px;background:rgba(0,0,0,0.04)"></i><i style="left:42.30px;top:0.0px;width:5.00px;height:4.0px;background:rgba(0,0,0,0.02)"></i><i style="left:0.30px;top:4.0px;width:5.00px;height:6.0px;background:rgba(0,0,0,0.20)"></i><i style="left:5.30px;top:4.0px;width:5.00px;height:6.0px;background:rgba(0,0,0,0.08)"></i><i style="left:10.30px;top:4.0px;width:6.00px;height:6.0px;background:rgba(0,0,0,0.24)"></i><i style="left:16.30px;top:4.0px;width:5.00px;height:6.0px;background:rgba(0,0,0,0.16)"></i><i style="left:21.30px;top:4.0px;width:5.00px;height:6.0px;background:rgba(0,0,0,0.13)"></i><i style="left:26.30px;top:4.0px;width:6.00px;height:6.0px;background:rgba(0,0,0,0.27)"></i><i style="left:32.30px;top:4.0px;width:5.00px;height:6.0px;background:rgba(0,0,0,0.17)"></i><i style="left:37.30px;top:4.0px;width:5.00px;height:6.0px;background:rgba(0,0,0,0.15)"></i><i style="left:42.30px;top:4.0px;width:5.00px;height:6.0px;background:rgba(0,0,0,0.11)"></i><i style="left:0.30px;top:10.0px;width:5.00px;height:6.0px;background:rgba(0,0,0,0.11)"></i><i style="left:5.30px;top:10.0px;width:5.00px;height:6.0px;background:rgba(0,0,0,0.10)"></i><i style="left:10.30px;top:10.0px;width:6.00px;height:6.0px;background:rgba(0,0,0,0.12)"></i><i style="left:16.30px;top:10.0px;width:5.00px;height:6.0px;background:rgba(0,0,0,0.13)"></i><i style="left:21.30px;top:10.0px;width:5.00px;height:6.0px;background:rgba(0,0,0,0.10)"></i><i style="left:26.30px;top:10.0px;width:6.00px;height:6.0px;background:rgba(0,0,0,0.17)"></i><i style="left:32.30px;top:10.0px;width:5.00px;height:6.0px;background:rgba(0,0,0,0.12)"></i><i style="left:37.30px;top:10.0px;width:5.00px;height:6.0px;background:rgba(0,0,0,0.15)"></i><i style="left:42.30px;top:10.0px;width:5.00px;height:6.0px;background:rgba(0,0,0,0.19)"></i></div>
<div class="t dg" id="r7_num" style="left:625.80px;top:306.49px;font-size:12.00px;color:#333;letter-spacing:-0.04px;">123463</div>
<div class="t" id="r7_state" style="left:758.40px;top:305.59px;font-size:12.00px;color:#333;letter-spacing:-0.60px;">有効</div>
<div class="t dg" id="r7_lic" style="left:954.00px;top:307.19px;font-size:12.00px;color:#333;">0</div>
<svg style="left:984.5px;top:310.28px" width="13" height="3" viewBox="0 0 13 3" fill="#222"><circle cx="1.4" cy="1.5" r="1.3"/><circle cx="6.5" cy="1.5" r="1.3"/><circle cx="11.6" cy="1.5" r="1.3"/></svg></div>
<svg style="left:1251.5px;top:344.5px" width="6" height="4" viewBox="0 0 6 4"><path d="M0 4L3 0L6 4Z" fill="#999"/></svg>
<div class="abs" style="left:1250px;top:351px;width:8.5px;height:11.6px;background:#bdbdbd"></div>
<svg style="left:1251.5px;top:650px" width="6" height="4" viewBox="0 0 6 4"><path d="M0 0L3 4L6 0Z" fill="#777"/></svg>
<div class="abs" style="left:274px;top:340px;width:2.5px;height:208px;background:#fdfdfd"></div>
<div class="abs" style="left:228px;top:336px;width:46px;height:215.5px;border:5px solid #ea6400;box-shadow:inset 0 0 0 2px #fdfbf0"></div>
<div class="abs" style="left:1220px;top:660.5px;width:47px;height:47px;background:#00789a;border-radius:50%;box-shadow:0 2px 4px rgba(0,0,0,.25)"></div>
<svg style="left:1237px;top:678px" width="13" height="13" viewBox="0 0 13 13" stroke="#fff" stroke-width="1.8"><path d="M6.5 0V13M0 6.5H13"/></svg>
</body>
</html>
